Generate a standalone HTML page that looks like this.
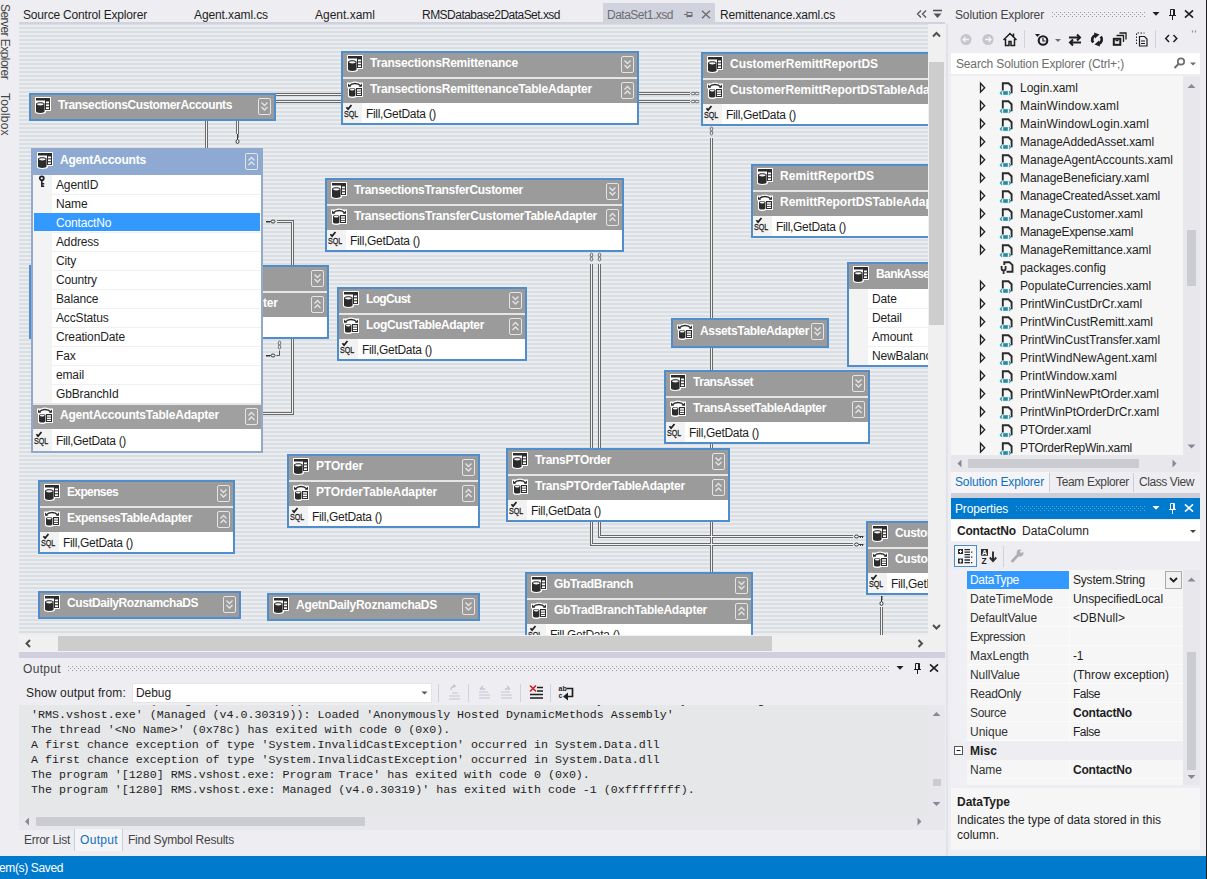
<!DOCTYPE html>
<html lang="en"><head><meta charset="utf-8"><title>DataSet1.xsd - Microsoft Visual Studio</title>
<style>
html,body{margin:0;padding:0}
body{width:1207px;height:879px;overflow:hidden;background:#eeeef2;position:relative;font-family:"Liberation Sans",sans-serif;font-size:12px}
.t{position:absolute;white-space:nowrap;display:block}
.r,.i,.bx{position:absolute;display:block}
.bx{overflow:hidden}
.v{writing-mode:vertical-rl;line-height:14px}
#dz{position:absolute;overflow:hidden;background:repeating-linear-gradient(to bottom,#dadee3 0,#dadee3 1px,#e9edf0 1px,#e9edf0 3px,#dadee3 3px,#dadee3 4px)}
</style></head>
<body>
<div id="dz" style="left:19px;top:24px;width:909px;height:611px"><svg class="i" style="left:0;top:0" width="909" height="611" viewBox="19 24 909 611"><path d="M276 94.500H341 M276 101.500H341 M639 93.500H690 M639 101.500H690 M206.500 121V148 M237.500 121V134 M277 221.500H292.500V413.500H263 M591.500 264V544.500H853 M599.500 264V536.500H853 M711.500 138V635 M881.500 607V635" fill="none" stroke="#6a6a6a" stroke-width="3"/><path d="M276 94.500H341 M276 101.500H341 M639 93.500H690 M639 101.500H690 M206.500 121V148 M237.500 121V134 M277 221.500H292.500V413.500H263 M591.500 264V544.500H853 M599.500 264V536.500H853 M711.500 138V635 M881.500 607V635" fill="none" stroke="#f4f4f4" stroke-width="1"/><path d="M266 221.5h5M267 221.5v1.500M269 221.5v1.500" stroke="#3a3a3a" stroke-width="1" fill="none"/><ellipse cx="273" cy="221.5" rx="2" ry="1.500" fill="#eee" stroke="#3a3a3a" stroke-width="1"/><path d="M266 355.5h5M267 355.5v1.500M269 355.5v1.500" stroke="#3a3a3a" stroke-width="1" fill="none"/><ellipse cx="273" cy="355.5" rx="2" ry="1.500" fill="#eee" stroke="#3a3a3a" stroke-width="1"/><ellipse cx="279.5" cy="343" rx="1.300" ry="2" fill="none" stroke="#555" stroke-width=".8"/><ellipse cx="279.5" cy="347" rx="1.300" ry="2" fill="none" stroke="#555" stroke-width=".8"/><path d="M276.500 355.500h3v-5" fill="none" stroke="#555" stroke-width="1"/><ellipse cx="693" cy="93.5" rx="2" ry="1.300" fill="none" stroke="#555" stroke-width=".8"/><ellipse cx="697" cy="93.5" rx="2" ry="1.300" fill="none" stroke="#555" stroke-width=".8"/><ellipse cx="693" cy="101.5" rx="2" ry="1.300" fill="none" stroke="#555" stroke-width=".8"/><ellipse cx="697" cy="101.5" rx="2" ry="1.300" fill="none" stroke="#555" stroke-width=".8"/><ellipse cx="711.5" cy="129" rx="1.300" ry="2" fill="none" stroke="#555" stroke-width=".8"/><ellipse cx="711.5" cy="133" rx="1.300" ry="2" fill="none" stroke="#555" stroke-width=".8"/><ellipse cx="591.5" cy="255" rx="1.300" ry="2" fill="none" stroke="#555" stroke-width=".8"/><ellipse cx="591.5" cy="259" rx="1.300" ry="2" fill="none" stroke="#555" stroke-width=".8"/><ellipse cx="599.5" cy="255" rx="1.300" ry="2" fill="none" stroke="#555" stroke-width=".8"/><ellipse cx="599.5" cy="259" rx="1.300" ry="2" fill="none" stroke="#555" stroke-width=".8"/><path d="M858.5 536.5h5M860.5 536.5v1.500M862.5 536.5v1.500" stroke="#3a3a3a" stroke-width="1" fill="none"/><ellipse cx="856.5" cy="536.5" rx="2" ry="1.500" fill="#eee" stroke="#3a3a3a" stroke-width="1"/><path d="M858.5 544.5h5M860.5 544.5v1.500M862.5 544.5v1.500" stroke="#3a3a3a" stroke-width="1" fill="none"/><ellipse cx="856.5" cy="544.5" rx="2" ry="1.500" fill="#eee" stroke="#3a3a3a" stroke-width="1"/><path d="M237.5 134v6M237.5 135h1.500M237.5 137h1.500" stroke="#3a3a3a" stroke-width="1" fill="none"/><ellipse cx="237.5" cy="141.5" rx="1.500" ry="2" fill="#eee" stroke="#3a3a3a" stroke-width="1"/><path d="M881.5 596v6M881.5 597h1.500M881.5 599h1.500" stroke="#3a3a3a" stroke-width="1" fill="none"/><ellipse cx="881.5" cy="603.5" rx="1.500" ry="2" fill="#eee" stroke="#3a3a3a" stroke-width="1"/></svg><div class="bx" style="left:10px;top:69px;width:247px;height:28px;background:#4f8dcd"><div class="r" style="left:2px;top:2px;width:243px;height:24px;background:#9b9b9b;"></div><svg class="i" style="left:6px;top:4px" width="17" height="17" viewBox="0 0 17 17" shape-rendering="geometricPrecision"><path d="M0 1c0-.6.400-1 1-1h14c.6 0 1 .4 1 1v12c0 .6-.4 1-1 1h-4v1c0 1.100-2.400 2-5.500 2S0 16.100 0 15z" fill="#fff"/><rect x="1" y="1" width="14" height="2.500" fill="#2b2b2b"/><rect x="10" y="3" width="5" height="10" fill="#2b2b2b"/><rect x="11" y="4.500" width="3" height="1.800" fill="#fff"/><rect x="11" y="7.400" width="3" height="1.800" fill="#fff"/><rect x="11" y="10.300" width="3" height="1.800" fill="#fff"/><path d="M1 6.800c0-.9 1.900-1.600 4.300-1.600s4.300.7 4.300 1.600v7.500c0 .9-1.900 1.600-4.300 1.600S1 15.200 1 14.300z" fill="#2b2b2b"/><ellipse cx="5.300" cy="7.300" rx="3.200" ry="1.100" fill="#f4f4f4"/></svg><span class="t" style="left:29px;top:3.5px;line-height:16px;font-size:12px;color:#fff;letter-spacing:-0.383px;font-weight:700;">TransectionsCustomerAccounts</span><svg class="i" style="left:229px;top:5px" width="13" height="17" viewBox="0 0 13 17"><rect x=".5" y=".5" width="12" height="16" rx="1.500" fill="none" stroke="#e4e4e4" stroke-width="1"/><path d="M3.500 4.500l3 3 3-3M3.500 9l3 3 3-3" fill="none" stroke="#e4e4e4" stroke-width="1.400"/></svg></div><div class="bx" style="left:322px;top:27px;width:298px;height:74px;background:#4f8dcd"><div class="r" style="left:2px;top:2px;width:294px;height:24px;background:#9b9b9b;"></div><svg class="i" style="left:6px;top:4px" width="17" height="17" viewBox="0 0 17 17" shape-rendering="geometricPrecision"><path d="M0 1c0-.6.400-1 1-1h14c.6 0 1 .4 1 1v12c0 .6-.4 1-1 1h-4v1c0 1.100-2.400 2-5.500 2S0 16.100 0 15z" fill="#fff"/><rect x="1" y="1" width="14" height="2.500" fill="#2b2b2b"/><rect x="10" y="3" width="5" height="10" fill="#2b2b2b"/><rect x="11" y="4.500" width="3" height="1.800" fill="#fff"/><rect x="11" y="7.400" width="3" height="1.800" fill="#fff"/><rect x="11" y="10.300" width="3" height="1.800" fill="#fff"/><path d="M1 6.800c0-.9 1.900-1.600 4.300-1.600s4.300.7 4.300 1.600v7.500c0 .9-1.900 1.600-4.300 1.600S1 15.200 1 14.300z" fill="#2b2b2b"/><ellipse cx="5.300" cy="7.300" rx="3.200" ry="1.100" fill="#f4f4f4"/></svg><span class="t" style="left:29px;top:3.5px;line-height:16px;font-size:12px;color:#fff;letter-spacing:-0.197px;font-weight:700;">TransectionsRemittenance</span><svg class="i" style="left:280px;top:5px" width="13" height="17" viewBox="0 0 13 17"><rect x=".5" y=".5" width="12" height="16" rx="1.500" fill="none" stroke="#e4e4e4" stroke-width="1"/><path d="M3.500 4.500l3 3 3-3M3.500 9l3 3 3-3" fill="none" stroke="#e4e4e4" stroke-width="1.400"/></svg><div class="r" style="left:2px;top:26px;width:294px;height:2px;background:#e6e6e6;"></div><div class="r" style="left:2px;top:28px;width:294px;height:24px;background:#9b9b9b;"></div><svg class="i" style="left:6px;top:30px" width="17" height="17" viewBox="0 0 17 17"><path d="M0 1.500h4c2.500-1.500 5.500-1.500 8 0h4v5h-0v9.500H9c-.8.600-2.200 1-3.800 1C2.800 17 1 16.200 1 15V6.500H0z" fill="#fff"/><path d="M2.200 5c2.800-3.300 8.800-3.300 11.600 0" fill="none" stroke="#2b2b2b" stroke-width="1.400"/><polygon points="1,2.500 4.200,5.800 1,5.800" fill="#2b2b2b"/><polygon points="15,2.500 11.800,5.800 15,5.800" fill="#2b2b2b"/><rect x="9" y="7" width="6" height="8" fill="#2b2b2b"/><rect x="10" y="8.200" width="4" height="1.500" fill="#fff"/><rect x="10" y="10.500" width="4" height="1.500" fill="#fff"/><rect x="10" y="12.800" width="4" height="1.200" fill="#fff"/><path d="M2 8.200c0-.7 1.400-1.300 3.200-1.300s3.200.6 3.200 1.300v6c0 .7-1.400 1.300-3.200 1.300S2 14.900 2 14.200z" fill="#2b2b2b"/><ellipse cx="5.200" cy="8.500" rx="2.300" ry=".9" fill="#f4f4f4"/></svg><span class="t" style="left:29px;top:29.5px;line-height:16px;font-size:12px;color:#fff;letter-spacing:-0.181px;font-weight:700;">TransectionsRemittenanceTableAdapter</span><svg class="i" style="left:280px;top:31px" width="13" height="17" viewBox="0 0 13 17"><rect x=".5" y=".5" width="12" height="16" rx="1.500" fill="none" stroke="#e4e4e4" stroke-width="1"/><path d="M3.500 7.500l3-3 3 3M3.500 12l3-3 3 3" fill="none" stroke="#e4e4e4" stroke-width="1.400"/></svg><div class="r" style="left:2px;top:52px;width:294px;height:20px;background:#fff;"></div><div class="r" style="left:2px;top:52px;width:19px;height:20px;background:#f2f2f2;"></div><svg class="i" style="left:2px;top:52px" width="18" height="18" viewBox="0 0 18 18"><path d="M3.400 4.200l1.700 1.900L8.500 2" stroke="#1e1e1e" stroke-width="1.700" fill="none"/><text x="1" y="14.400" font-family="Liberation Sans,sans-serif" font-size="9.800" fill="#1e1e1e" stroke="#1e1e1e" stroke-width=".3" textLength="14.300" lengthAdjust="spacingAndGlyphs">SQL</text></svg><span class="t" style="left:25px;top:55px;line-height:16px;font-size:12px;color:#1e1e1e;letter-spacing:-0.312px;">Fill,GetData ()</span></div><div class="bx" style="left:682px;top:28px;width:259px;height:74px;background:#4f8dcd"><div class="r" style="left:2px;top:2px;width:255px;height:24px;background:#9b9b9b;"></div><svg class="i" style="left:6px;top:4px" width="17" height="17" viewBox="0 0 17 17" shape-rendering="geometricPrecision"><path d="M0 1c0-.6.400-1 1-1h14c.6 0 1 .4 1 1v12c0 .6-.4 1-1 1h-4v1c0 1.100-2.400 2-5.500 2S0 16.100 0 15z" fill="#fff"/><rect x="1" y="1" width="14" height="2.500" fill="#2b2b2b"/><rect x="10" y="3" width="5" height="10" fill="#2b2b2b"/><rect x="11" y="4.500" width="3" height="1.800" fill="#fff"/><rect x="11" y="7.400" width="3" height="1.800" fill="#fff"/><rect x="11" y="10.300" width="3" height="1.800" fill="#fff"/><path d="M1 6.800c0-.9 1.900-1.600 4.300-1.600s4.300.7 4.300 1.600v7.500c0 .9-1.900 1.600-4.300 1.600S1 15.200 1 14.300z" fill="#2b2b2b"/><ellipse cx="5.300" cy="7.300" rx="3.200" ry="1.100" fill="#f4f4f4"/></svg><span class="t" style="left:29px;top:3.5px;line-height:16px;font-size:12px;color:#fff;letter-spacing:-0.031px;font-weight:700;">CustomerRemittReportDS</span><svg class="i" style="left:241px;top:5px" width="13" height="17" viewBox="0 0 13 17"><rect x=".5" y=".5" width="12" height="16" rx="1.500" fill="none" stroke="#e4e4e4" stroke-width="1"/><path d="M3.500 4.500l3 3 3-3M3.500 9l3 3 3-3" fill="none" stroke="#e4e4e4" stroke-width="1.400"/></svg><div class="r" style="left:2px;top:26px;width:255px;height:2px;background:#e6e6e6;"></div><div class="r" style="left:2px;top:28px;width:255px;height:24px;background:#9b9b9b;"></div><svg class="i" style="left:6px;top:30px" width="17" height="17" viewBox="0 0 17 17"><path d="M0 1.500h4c2.500-1.500 5.500-1.500 8 0h4v5h-0v9.500H9c-.8.600-2.200 1-3.800 1C2.800 17 1 16.200 1 15V6.500H0z" fill="#fff"/><path d="M2.200 5c2.800-3.300 8.800-3.300 11.600 0" fill="none" stroke="#2b2b2b" stroke-width="1.400"/><polygon points="1,2.500 4.200,5.800 1,5.800" fill="#2b2b2b"/><polygon points="15,2.500 11.800,5.800 15,5.800" fill="#2b2b2b"/><rect x="9" y="7" width="6" height="8" fill="#2b2b2b"/><rect x="10" y="8.200" width="4" height="1.500" fill="#fff"/><rect x="10" y="10.500" width="4" height="1.500" fill="#fff"/><rect x="10" y="12.800" width="4" height="1.200" fill="#fff"/><path d="M2 8.200c0-.7 1.400-1.300 3.200-1.300s3.200.6 3.200 1.300v6c0 .7-1.400 1.300-3.200 1.300S2 14.900 2 14.200z" fill="#2b2b2b"/><ellipse cx="5.200" cy="8.500" rx="2.300" ry=".9" fill="#f4f4f4"/></svg><span class="t" style="left:29px;top:29.5px;line-height:16px;font-size:12px;color:#fff;letter-spacing:-0.073px;font-weight:700;">CustomerRemittReportDSTableAdapter</span><svg class="i" style="left:241px;top:31px" width="13" height="17" viewBox="0 0 13 17"><rect x=".5" y=".5" width="12" height="16" rx="1.500" fill="none" stroke="#e4e4e4" stroke-width="1"/><path d="M3.500 7.500l3-3 3 3M3.500 12l3-3 3 3" fill="none" stroke="#e4e4e4" stroke-width="1.400"/></svg><div class="r" style="left:2px;top:52px;width:255px;height:20px;background:#fff;"></div><div class="r" style="left:2px;top:52px;width:19px;height:20px;background:#f2f2f2;"></div><svg class="i" style="left:2px;top:52px" width="18" height="18" viewBox="0 0 18 18"><path d="M3.400 4.200l1.700 1.900L8.500 2" stroke="#1e1e1e" stroke-width="1.700" fill="none"/><text x="1" y="14.400" font-family="Liberation Sans,sans-serif" font-size="9.800" fill="#1e1e1e" stroke="#1e1e1e" stroke-width=".3" textLength="14.300" lengthAdjust="spacingAndGlyphs">SQL</text></svg><span class="t" style="left:25px;top:55px;line-height:16px;font-size:12px;color:#1e1e1e;letter-spacing:-0.312px;">Fill,GetData ()</span></div><div class="bx" style="left:306px;top:154px;width:299px;height:74px;background:#4f8dcd"><div class="r" style="left:2px;top:2px;width:295px;height:24px;background:#9b9b9b;"></div><svg class="i" style="left:6px;top:4px" width="17" height="17" viewBox="0 0 17 17" shape-rendering="geometricPrecision"><path d="M0 1c0-.6.400-1 1-1h14c.6 0 1 .4 1 1v12c0 .6-.4 1-1 1h-4v1c0 1.100-2.400 2-5.500 2S0 16.100 0 15z" fill="#fff"/><rect x="1" y="1" width="14" height="2.500" fill="#2b2b2b"/><rect x="10" y="3" width="5" height="10" fill="#2b2b2b"/><rect x="11" y="4.500" width="3" height="1.800" fill="#fff"/><rect x="11" y="7.400" width="3" height="1.800" fill="#fff"/><rect x="11" y="10.300" width="3" height="1.800" fill="#fff"/><path d="M1 6.800c0-.9 1.900-1.600 4.300-1.600s4.300.7 4.300 1.600v7.500c0 .9-1.900 1.600-4.300 1.600S1 15.200 1 14.300z" fill="#2b2b2b"/><ellipse cx="5.300" cy="7.300" rx="3.200" ry="1.100" fill="#f4f4f4"/></svg><span class="t" style="left:29px;top:3.5px;line-height:16px;font-size:12px;color:#fff;letter-spacing:-0.3px;font-weight:700;">TransectionsTransferCustomer</span><svg class="i" style="left:281px;top:5px" width="13" height="17" viewBox="0 0 13 17"><rect x=".5" y=".5" width="12" height="16" rx="1.500" fill="none" stroke="#e4e4e4" stroke-width="1"/><path d="M3.500 4.500l3 3 3-3M3.500 9l3 3 3-3" fill="none" stroke="#e4e4e4" stroke-width="1.400"/></svg><div class="r" style="left:2px;top:26px;width:295px;height:2px;background:#e6e6e6;"></div><div class="r" style="left:2px;top:28px;width:295px;height:24px;background:#9b9b9b;"></div><svg class="i" style="left:6px;top:30px" width="17" height="17" viewBox="0 0 17 17"><path d="M0 1.500h4c2.500-1.500 5.500-1.500 8 0h4v5h-0v9.500H9c-.8.600-2.200 1-3.800 1C2.800 17 1 16.200 1 15V6.500H0z" fill="#fff"/><path d="M2.200 5c2.800-3.300 8.800-3.300 11.600 0" fill="none" stroke="#2b2b2b" stroke-width="1.400"/><polygon points="1,2.500 4.200,5.800 1,5.800" fill="#2b2b2b"/><polygon points="15,2.500 11.800,5.800 15,5.800" fill="#2b2b2b"/><rect x="9" y="7" width="6" height="8" fill="#2b2b2b"/><rect x="10" y="8.200" width="4" height="1.500" fill="#fff"/><rect x="10" y="10.500" width="4" height="1.500" fill="#fff"/><rect x="10" y="12.800" width="4" height="1.200" fill="#fff"/><path d="M2 8.200c0-.7 1.400-1.300 3.200-1.300s3.200.6 3.200 1.300v6c0 .7-1.400 1.300-3.200 1.300S2 14.900 2 14.200z" fill="#2b2b2b"/><ellipse cx="5.200" cy="8.500" rx="2.300" ry=".9" fill="#f4f4f4"/></svg><span class="t" style="left:29px;top:29.5px;line-height:16px;font-size:12px;color:#fff;letter-spacing:-0.255px;font-weight:700;">TransectionsTransferCustomerTableAdapter</span><svg class="i" style="left:281px;top:31px" width="13" height="17" viewBox="0 0 13 17"><rect x=".5" y=".5" width="12" height="16" rx="1.500" fill="none" stroke="#e4e4e4" stroke-width="1"/><path d="M3.500 7.500l3-3 3 3M3.500 12l3-3 3 3" fill="none" stroke="#e4e4e4" stroke-width="1.400"/></svg><div class="r" style="left:2px;top:52px;width:295px;height:20px;background:#fff;"></div><div class="r" style="left:2px;top:52px;width:19px;height:20px;background:#f2f2f2;"></div><svg class="i" style="left:2px;top:52px" width="18" height="18" viewBox="0 0 18 18"><path d="M3.400 4.200l1.700 1.900L8.500 2" stroke="#1e1e1e" stroke-width="1.700" fill="none"/><text x="1" y="14.400" font-family="Liberation Sans,sans-serif" font-size="9.800" fill="#1e1e1e" stroke="#1e1e1e" stroke-width=".3" textLength="14.300" lengthAdjust="spacingAndGlyphs">SQL</text></svg><span class="t" style="left:25px;top:55px;line-height:16px;font-size:12px;color:#1e1e1e;letter-spacing:-0.312px;">Fill,GetData ()</span></div><div class="bx" style="left:732px;top:140px;width:249px;height:74px;background:#4f8dcd"><div class="r" style="left:2px;top:2px;width:245px;height:24px;background:#9b9b9b;"></div><svg class="i" style="left:6px;top:4px" width="17" height="17" viewBox="0 0 17 17" shape-rendering="geometricPrecision"><path d="M0 1c0-.6.400-1 1-1h14c.6 0 1 .4 1 1v12c0 .6-.4 1-1 1h-4v1c0 1.100-2.400 2-5.500 2S0 16.100 0 15z" fill="#fff"/><rect x="1" y="1" width="14" height="2.500" fill="#2b2b2b"/><rect x="10" y="3" width="5" height="10" fill="#2b2b2b"/><rect x="11" y="4.500" width="3" height="1.800" fill="#fff"/><rect x="11" y="7.400" width="3" height="1.800" fill="#fff"/><rect x="11" y="10.300" width="3" height="1.800" fill="#fff"/><path d="M1 6.800c0-.9 1.900-1.600 4.300-1.600s4.300.7 4.300 1.600v7.500c0 .9-1.900 1.600-4.300 1.600S1 15.200 1 14.300z" fill="#2b2b2b"/><ellipse cx="5.300" cy="7.300" rx="3.200" ry="1.100" fill="#f4f4f4"/></svg><span class="t" style="left:29px;top:3.5px;line-height:16px;font-size:12px;color:#fff;letter-spacing:0.094px;font-weight:700;">RemittReportDS</span><svg class="i" style="left:231px;top:5px" width="13" height="17" viewBox="0 0 13 17"><rect x=".5" y=".5" width="12" height="16" rx="1.500" fill="none" stroke="#e4e4e4" stroke-width="1"/><path d="M3.500 4.500l3 3 3-3M3.500 9l3 3 3-3" fill="none" stroke="#e4e4e4" stroke-width="1.400"/></svg><div class="r" style="left:2px;top:26px;width:245px;height:2px;background:#e6e6e6;"></div><div class="r" style="left:2px;top:28px;width:245px;height:24px;background:#9b9b9b;"></div><svg class="i" style="left:6px;top:30px" width="17" height="17" viewBox="0 0 17 17"><path d="M0 1.500h4c2.500-1.500 5.500-1.500 8 0h4v5h-0v9.500H9c-.8.600-2.200 1-3.800 1C2.800 17 1 16.200 1 15V6.500H0z" fill="#fff"/><path d="M2.200 5c2.800-3.300 8.800-3.300 11.600 0" fill="none" stroke="#2b2b2b" stroke-width="1.400"/><polygon points="1,2.500 4.200,5.800 1,5.800" fill="#2b2b2b"/><polygon points="15,2.500 11.800,5.800 15,5.800" fill="#2b2b2b"/><rect x="9" y="7" width="6" height="8" fill="#2b2b2b"/><rect x="10" y="8.200" width="4" height="1.500" fill="#fff"/><rect x="10" y="10.500" width="4" height="1.500" fill="#fff"/><rect x="10" y="12.800" width="4" height="1.200" fill="#fff"/><path d="M2 8.200c0-.7 1.400-1.300 3.200-1.300s3.200.6 3.200 1.300v6c0 .7-1.400 1.300-3.200 1.300S2 14.900 2 14.200z" fill="#2b2b2b"/><ellipse cx="5.200" cy="8.500" rx="2.300" ry=".9" fill="#f4f4f4"/></svg><span class="t" style="left:29px;top:29.5px;line-height:16px;font-size:12px;color:#fff;letter-spacing:-0.018px;font-weight:700;">RemittReportDSTableAdapter</span><svg class="i" style="left:231px;top:31px" width="13" height="17" viewBox="0 0 13 17"><rect x=".5" y=".5" width="12" height="16" rx="1.500" fill="none" stroke="#e4e4e4" stroke-width="1"/><path d="M3.500 7.500l3-3 3 3M3.500 12l3-3 3 3" fill="none" stroke="#e4e4e4" stroke-width="1.400"/></svg><div class="r" style="left:2px;top:52px;width:245px;height:20px;background:#fff;"></div><div class="r" style="left:2px;top:52px;width:19px;height:20px;background:#f2f2f2;"></div><svg class="i" style="left:2px;top:52px" width="18" height="18" viewBox="0 0 18 18"><path d="M3.400 4.200l1.700 1.900L8.500 2" stroke="#1e1e1e" stroke-width="1.700" fill="none"/><text x="1" y="14.400" font-family="Liberation Sans,sans-serif" font-size="9.800" fill="#1e1e1e" stroke="#1e1e1e" stroke-width=".3" textLength="14.300" lengthAdjust="spacingAndGlyphs">SQL</text></svg><span class="t" style="left:25px;top:55px;line-height:16px;font-size:12px;color:#1e1e1e;letter-spacing:-0.312px;">Fill,GetData ()</span></div><div class="bx" style="left:10px;top:241px;width:300px;height:74px;background:#4f8dcd"><div class="r" style="left:2px;top:2px;width:296px;height:24px;background:#9b9b9b;"></div><svg class="i" style="left:6px;top:4px" width="17" height="17" viewBox="0 0 17 17" shape-rendering="geometricPrecision"><path d="M0 1c0-.6.400-1 1-1h14c.6 0 1 .4 1 1v12c0 .6-.4 1-1 1h-4v1c0 1.100-2.400 2-5.500 2S0 16.100 0 15z" fill="#fff"/><rect x="1" y="1" width="14" height="2.500" fill="#2b2b2b"/><rect x="10" y="3" width="5" height="10" fill="#2b2b2b"/><rect x="11" y="4.500" width="3" height="1.800" fill="#fff"/><rect x="11" y="7.400" width="3" height="1.800" fill="#fff"/><rect x="11" y="10.300" width="3" height="1.800" fill="#fff"/><path d="M1 6.800c0-.9 1.900-1.600 4.300-1.600s4.300.7 4.300 1.600v7.500c0 .9-1.900 1.600-4.300 1.600S1 15.200 1 14.300z" fill="#2b2b2b"/><ellipse cx="5.300" cy="7.300" rx="3.200" ry="1.100" fill="#f4f4f4"/></svg><svg class="i" style="left:282px;top:5px" width="13" height="17" viewBox="0 0 13 17"><rect x=".5" y=".5" width="12" height="16" rx="1.500" fill="none" stroke="#e4e4e4" stroke-width="1"/><path d="M3.500 4.500l3 3 3-3M3.500 9l3 3 3-3" fill="none" stroke="#e4e4e4" stroke-width="1.400"/></svg><div class="r" style="left:2px;top:26px;width:296px;height:2px;background:#e6e6e6;"></div><div class="r" style="left:2px;top:28px;width:296px;height:24px;background:#9b9b9b;"></div><svg class="i" style="left:6px;top:30px" width="17" height="17" viewBox="0 0 17 17"><path d="M0 1.500h4c2.500-1.500 5.500-1.500 8 0h4v5h-0v9.500H9c-.8.600-2.200 1-3.800 1C2.800 17 1 16.200 1 15V6.500H0z" fill="#fff"/><path d="M2.200 5c2.800-3.300 8.800-3.300 11.600 0" fill="none" stroke="#2b2b2b" stroke-width="1.400"/><polygon points="1,2.500 4.200,5.800 1,5.800" fill="#2b2b2b"/><polygon points="15,2.500 11.800,5.800 15,5.800" fill="#2b2b2b"/><rect x="9" y="7" width="6" height="8" fill="#2b2b2b"/><rect x="10" y="8.200" width="4" height="1.500" fill="#fff"/><rect x="10" y="10.500" width="4" height="1.500" fill="#fff"/><rect x="10" y="12.800" width="4" height="1.200" fill="#fff"/><path d="M2 8.200c0-.7 1.400-1.300 3.200-1.300s3.200.6 3.200 1.300v6c0 .7-1.400 1.300-3.200 1.300S2 14.900 2 14.200z" fill="#2b2b2b"/><ellipse cx="5.200" cy="8.500" rx="2.300" ry=".9" fill="#f4f4f4"/></svg><svg class="i" style="left:282px;top:31px" width="13" height="17" viewBox="0 0 13 17"><rect x=".5" y=".5" width="12" height="16" rx="1.500" fill="none" stroke="#e4e4e4" stroke-width="1"/><path d="M3.500 7.500l3-3 3 3M3.500 12l3-3 3 3" fill="none" stroke="#e4e4e4" stroke-width="1.400"/></svg><div class="r" style="left:2px;top:52px;width:296px;height:20px;background:#fff;"></div><div class="r" style="left:2px;top:52px;width:19px;height:20px;background:#f2f2f2;"></div><svg class="i" style="left:2px;top:52px" width="18" height="18" viewBox="0 0 18 18"><path d="M3.400 4.200l1.700 1.900L8.500 2" stroke="#1e1e1e" stroke-width="1.700" fill="none"/><text x="1" y="14.400" font-family="Liberation Sans,sans-serif" font-size="9.800" fill="#1e1e1e" stroke="#1e1e1e" stroke-width=".3" textLength="14.300" lengthAdjust="spacingAndGlyphs">SQL</text></svg><span class="t" style="left:25px;top:55px;line-height:16px;font-size:12px;color:#1e1e1e;letter-spacing:-0.312px;">Fill,GetData ()</span></div><span class="t" style="left:244px;top:271px;line-height:16px;font-size:12px;color:#fff;letter-spacing:-0.2px;font-weight:700;">ter</span><div class="bx" style="left:318px;top:263px;width:190px;height:74px;background:#4f8dcd"><div class="r" style="left:2px;top:2px;width:186px;height:24px;background:#9b9b9b;"></div><svg class="i" style="left:6px;top:4px" width="17" height="17" viewBox="0 0 17 17" shape-rendering="geometricPrecision"><path d="M0 1c0-.6.400-1 1-1h14c.6 0 1 .4 1 1v12c0 .6-.4 1-1 1h-4v1c0 1.100-2.400 2-5.500 2S0 16.100 0 15z" fill="#fff"/><rect x="1" y="1" width="14" height="2.500" fill="#2b2b2b"/><rect x="10" y="3" width="5" height="10" fill="#2b2b2b"/><rect x="11" y="4.500" width="3" height="1.800" fill="#fff"/><rect x="11" y="7.400" width="3" height="1.800" fill="#fff"/><rect x="11" y="10.300" width="3" height="1.800" fill="#fff"/><path d="M1 6.800c0-.9 1.900-1.600 4.300-1.600s4.300.7 4.300 1.600v7.500c0 .9-1.900 1.600-4.300 1.600S1 15.200 1 14.300z" fill="#2b2b2b"/><ellipse cx="5.300" cy="7.300" rx="3.200" ry="1.100" fill="#f4f4f4"/></svg><span class="t" style="left:29px;top:3.5px;line-height:16px;font-size:12px;color:#fff;letter-spacing:-0.667px;font-weight:700;">LogCust</span><svg class="i" style="left:172px;top:5px" width="13" height="17" viewBox="0 0 13 17"><rect x=".5" y=".5" width="12" height="16" rx="1.500" fill="none" stroke="#e4e4e4" stroke-width="1"/><path d="M3.500 4.500l3 3 3-3M3.500 9l3 3 3-3" fill="none" stroke="#e4e4e4" stroke-width="1.400"/></svg><div class="r" style="left:2px;top:26px;width:186px;height:2px;background:#e6e6e6;"></div><div class="r" style="left:2px;top:28px;width:186px;height:24px;background:#9b9b9b;"></div><svg class="i" style="left:6px;top:30px" width="17" height="17" viewBox="0 0 17 17"><path d="M0 1.500h4c2.500-1.500 5.500-1.500 8 0h4v5h-0v9.500H9c-.8.600-2.200 1-3.800 1C2.800 17 1 16.200 1 15V6.500H0z" fill="#fff"/><path d="M2.200 5c2.800-3.300 8.800-3.300 11.600 0" fill="none" stroke="#2b2b2b" stroke-width="1.400"/><polygon points="1,2.500 4.200,5.800 1,5.800" fill="#2b2b2b"/><polygon points="15,2.500 11.800,5.800 15,5.800" fill="#2b2b2b"/><rect x="9" y="7" width="6" height="8" fill="#2b2b2b"/><rect x="10" y="8.200" width="4" height="1.500" fill="#fff"/><rect x="10" y="10.500" width="4" height="1.500" fill="#fff"/><rect x="10" y="12.800" width="4" height="1.200" fill="#fff"/><path d="M2 8.200c0-.7 1.400-1.300 3.200-1.300s3.200.6 3.200 1.300v6c0 .7-1.400 1.300-3.200 1.300S2 14.900 2 14.200z" fill="#2b2b2b"/><ellipse cx="5.200" cy="8.500" rx="2.300" ry=".9" fill="#f4f4f4"/></svg><span class="t" style="left:29px;top:29.5px;line-height:16px;font-size:12px;color:#fff;letter-spacing:-0.34px;font-weight:700;">LogCustTableAdapter</span><svg class="i" style="left:172px;top:31px" width="13" height="17" viewBox="0 0 13 17"><rect x=".5" y=".5" width="12" height="16" rx="1.500" fill="none" stroke="#e4e4e4" stroke-width="1"/><path d="M3.500 7.500l3-3 3 3M3.500 12l3-3 3 3" fill="none" stroke="#e4e4e4" stroke-width="1.400"/></svg><div class="r" style="left:2px;top:52px;width:186px;height:20px;background:#fff;"></div><div class="r" style="left:2px;top:52px;width:19px;height:20px;background:#f2f2f2;"></div><svg class="i" style="left:2px;top:52px" width="18" height="18" viewBox="0 0 18 18"><path d="M3.400 4.200l1.700 1.900L8.500 2" stroke="#1e1e1e" stroke-width="1.700" fill="none"/><text x="1" y="14.400" font-family="Liberation Sans,sans-serif" font-size="9.800" fill="#1e1e1e" stroke="#1e1e1e" stroke-width=".3" textLength="14.300" lengthAdjust="spacingAndGlyphs">SQL</text></svg><span class="t" style="left:25px;top:55px;line-height:16px;font-size:12px;color:#1e1e1e;letter-spacing:-0.312px;">Fill,GetData ()</span></div><div class="bx" style="left:652px;top:294px;width:158px;height:30px;background:#4f8dcd"><div class="r" style="left:2px;top:2px;width:154px;height:26px;background:#9b9b9b;"></div><svg class="i" style="left:6px;top:5px" width="17" height="17" viewBox="0 0 17 17"><path d="M0 1.500h4c2.500-1.500 5.500-1.500 8 0h4v5h-0v9.500H9c-.8.600-2.200 1-3.800 1C2.800 17 1 16.200 1 15V6.500H0z" fill="#fff"/><path d="M2.200 5c2.800-3.300 8.800-3.300 11.600 0" fill="none" stroke="#2b2b2b" stroke-width="1.400"/><polygon points="1,2.500 4.200,5.800 1,5.800" fill="#2b2b2b"/><polygon points="15,2.500 11.800,5.800 15,5.800" fill="#2b2b2b"/><rect x="9" y="7" width="6" height="8" fill="#2b2b2b"/><rect x="10" y="8.200" width="4" height="1.500" fill="#fff"/><rect x="10" y="10.500" width="4" height="1.500" fill="#fff"/><rect x="10" y="12.800" width="4" height="1.200" fill="#fff"/><path d="M2 8.200c0-.7 1.400-1.300 3.200-1.300s3.200.6 3.200 1.300v6c0 .7-1.400 1.300-3.200 1.300S2 14.900 2 14.200z" fill="#2b2b2b"/><ellipse cx="5.200" cy="8.500" rx="2.300" ry=".9" fill="#f4f4f4"/></svg><span class="t" style="left:29px;top:4.5px;line-height:16px;font-size:12px;color:#fff;letter-spacing:-0.342px;font-weight:700;">AssetsTableAdapter</span><svg class="i" style="left:140px;top:5px" width="13" height="17" viewBox="0 0 13 17"><rect x=".5" y=".5" width="12" height="16" rx="1.500" fill="none" stroke="#e4e4e4" stroke-width="1"/><path d="M3.500 4.500l3 3 3-3M3.500 9l3 3 3-3" fill="none" stroke="#e4e4e4" stroke-width="1.400"/></svg></div><div class="bx" style="left:828px;top:238px;width:163px;height:105px;background:#4f8dcd"><div class="r" style="left:2px;top:2px;width:159px;height:25px;background:#9b9b9b;"></div><svg class="i" style="left:6px;top:4px" width="17" height="17" viewBox="0 0 17 17" shape-rendering="geometricPrecision"><path d="M0 1c0-.6.400-1 1-1h14c.6 0 1 .4 1 1v12c0 .6-.4 1-1 1h-4v1c0 1.100-2.400 2-5.500 2S0 16.100 0 15z" fill="#fff"/><rect x="1" y="1" width="14" height="2.500" fill="#2b2b2b"/><rect x="10" y="3" width="5" height="10" fill="#2b2b2b"/><rect x="11" y="4.500" width="3" height="1.800" fill="#fff"/><rect x="11" y="7.400" width="3" height="1.800" fill="#fff"/><rect x="11" y="10.300" width="3" height="1.800" fill="#fff"/><path d="M1 6.800c0-.9 1.900-1.600 4.300-1.600s4.300.7 4.300 1.600v7.500c0 .9-1.900 1.600-4.300 1.600S1 15.200 1 14.300z" fill="#2b2b2b"/><ellipse cx="5.300" cy="7.300" rx="3.200" ry="1.100" fill="#f4f4f4"/></svg><span class="t" style="left:29px;top:4px;line-height:16px;font-size:12px;color:#fff;letter-spacing:-0.57px;font-weight:700;">BankAssets</span><div class="r" style="left:2px;top:27px;width:159px;height:76px;background:#fff;"></div><div class="r" style="left:2px;top:27px;width:19px;height:76px;background:#f3f3f3;"></div><span class="t" style="left:25px;top:28.5px;line-height:16px;font-size:12px;color:#1e1e1e;letter-spacing:-0.15px;">Date</span><div class="r" style="left:21px;top:46px;width:140px;height:1px;background:#f0f0f0;"></div><span class="t" style="left:25px;top:47.5px;line-height:16px;font-size:12px;color:#1e1e1e;letter-spacing:-0.15px;">Detail</span><div class="r" style="left:21px;top:65px;width:140px;height:1px;background:#f0f0f0;"></div><span class="t" style="left:25px;top:66.5px;line-height:16px;font-size:12px;color:#1e1e1e;letter-spacing:-0.15px;">Amount</span><div class="r" style="left:21px;top:84px;width:140px;height:1px;background:#f0f0f0;"></div><span class="t" style="left:25px;top:85.5px;line-height:16px;font-size:12px;color:#1e1e1e;letter-spacing:-0.15px;">NewBalance</span></div><div class="bx" style="left:645px;top:346px;width:206px;height:74px;background:#4f8dcd"><div class="r" style="left:2px;top:2px;width:202px;height:24px;background:#9b9b9b;"></div><svg class="i" style="left:6px;top:4px" width="17" height="17" viewBox="0 0 17 17" shape-rendering="geometricPrecision"><path d="M0 1c0-.6.400-1 1-1h14c.6 0 1 .4 1 1v12c0 .6-.4 1-1 1h-4v1c0 1.100-2.400 2-5.500 2S0 16.100 0 15z" fill="#fff"/><rect x="1" y="1" width="14" height="2.500" fill="#2b2b2b"/><rect x="10" y="3" width="5" height="10" fill="#2b2b2b"/><rect x="11" y="4.500" width="3" height="1.800" fill="#fff"/><rect x="11" y="7.400" width="3" height="1.800" fill="#fff"/><rect x="11" y="10.300" width="3" height="1.800" fill="#fff"/><path d="M1 6.800c0-.9 1.900-1.600 4.300-1.600s4.300.7 4.300 1.600v7.500c0 .9-1.900 1.600-4.300 1.600S1 15.200 1 14.300z" fill="#2b2b2b"/><ellipse cx="5.300" cy="7.300" rx="3.200" ry="1.100" fill="#f4f4f4"/></svg><span class="t" style="left:29px;top:3.5px;line-height:16px;font-size:12px;color:#fff;letter-spacing:-0.47px;font-weight:700;">TransAsset</span><svg class="i" style="left:188px;top:5px" width="13" height="17" viewBox="0 0 13 17"><rect x=".5" y=".5" width="12" height="16" rx="1.500" fill="none" stroke="#e4e4e4" stroke-width="1"/><path d="M3.500 4.500l3 3 3-3M3.500 9l3 3 3-3" fill="none" stroke="#e4e4e4" stroke-width="1.400"/></svg><div class="r" style="left:2px;top:26px;width:202px;height:2px;background:#e6e6e6;"></div><div class="r" style="left:2px;top:28px;width:202px;height:24px;background:#9b9b9b;"></div><svg class="i" style="left:6px;top:30px" width="17" height="17" viewBox="0 0 17 17"><path d="M0 1.500h4c2.500-1.500 5.500-1.500 8 0h4v5h-0v9.500H9c-.8.600-2.200 1-3.800 1C2.800 17 1 16.200 1 15V6.500H0z" fill="#fff"/><path d="M2.200 5c2.800-3.300 8.800-3.300 11.600 0" fill="none" stroke="#2b2b2b" stroke-width="1.400"/><polygon points="1,2.500 4.200,5.800 1,5.800" fill="#2b2b2b"/><polygon points="15,2.500 11.800,5.800 15,5.800" fill="#2b2b2b"/><rect x="9" y="7" width="6" height="8" fill="#2b2b2b"/><rect x="10" y="8.200" width="4" height="1.500" fill="#fff"/><rect x="10" y="10.500" width="4" height="1.500" fill="#fff"/><rect x="10" y="12.800" width="4" height="1.200" fill="#fff"/><path d="M2 8.200c0-.7 1.400-1.300 3.200-1.300s3.200.6 3.200 1.300v6c0 .7-1.400 1.300-3.200 1.300S2 14.900 2 14.200z" fill="#2b2b2b"/><ellipse cx="5.200" cy="8.500" rx="2.300" ry=".9" fill="#f4f4f4"/></svg><span class="t" style="left:29px;top:29.5px;line-height:16px;font-size:12px;color:#fff;letter-spacing:-0.341px;font-weight:700;">TransAssetTableAdapter</span><svg class="i" style="left:188px;top:31px" width="13" height="17" viewBox="0 0 13 17"><rect x=".5" y=".5" width="12" height="16" rx="1.500" fill="none" stroke="#e4e4e4" stroke-width="1"/><path d="M3.500 7.500l3-3 3 3M3.500 12l3-3 3 3" fill="none" stroke="#e4e4e4" stroke-width="1.400"/></svg><div class="r" style="left:2px;top:52px;width:202px;height:20px;background:#fff;"></div><div class="r" style="left:2px;top:52px;width:19px;height:20px;background:#f2f2f2;"></div><svg class="i" style="left:2px;top:52px" width="18" height="18" viewBox="0 0 18 18"><path d="M3.400 4.200l1.700 1.900L8.500 2" stroke="#1e1e1e" stroke-width="1.700" fill="none"/><text x="1" y="14.400" font-family="Liberation Sans,sans-serif" font-size="9.800" fill="#1e1e1e" stroke="#1e1e1e" stroke-width=".3" textLength="14.300" lengthAdjust="spacingAndGlyphs">SQL</text></svg><span class="t" style="left:25px;top:55px;line-height:16px;font-size:12px;color:#1e1e1e;letter-spacing:-0.312px;">Fill,GetData ()</span></div><div class="bx" style="left:12px;top:124px;width:232px;height:305px;background:#92a9cd"><div class="r" style="left:2px;top:2px;width:228px;height:24px;background:#8eaad3;"></div><svg class="i" style="left:6px;top:4px" width="17" height="17" viewBox="0 0 17 17" shape-rendering="geometricPrecision"><path d="M0 1c0-.6.400-1 1-1h14c.6 0 1 .4 1 1v12c0 .6-.4 1-1 1h-4v1c0 1.100-2.400 2-5.500 2S0 16.100 0 15z" fill="#fff"/><rect x="1" y="1" width="14" height="2.500" fill="#2b2b2b"/><rect x="10" y="3" width="5" height="10" fill="#2b2b2b"/><rect x="11" y="4.500" width="3" height="1.800" fill="#fff"/><rect x="11" y="7.400" width="3" height="1.800" fill="#fff"/><rect x="11" y="10.300" width="3" height="1.800" fill="#fff"/><path d="M1 6.800c0-.9 1.900-1.600 4.300-1.600s4.300.7 4.300 1.600v7.500c0 .9-1.900 1.600-4.300 1.600S1 15.200 1 14.300z" fill="#2b2b2b"/><ellipse cx="5.300" cy="7.300" rx="3.200" ry="1.100" fill="#f4f4f4"/></svg><span class="t" style="left:29px;top:3.5px;line-height:16px;font-size:12px;color:#fff;letter-spacing:-0.206px;font-weight:700;">AgentAccounts</span><svg class="i" style="left:214px;top:5px" width="13" height="17" viewBox="0 0 13 17"><rect x=".5" y=".5" width="12" height="16" rx="1.500" fill="none" stroke="#e4e4e4" stroke-width="1"/><path d="M3.500 7.500l3-3 3 3M3.500 12l3-3 3 3" fill="none" stroke="#e4e4e4" stroke-width="1.400"/></svg><div class="r" style="left:2px;top:27px;width:228px;height:228px;background:#fff;"></div><div class="r" style="left:2px;top:27px;width:19px;height:228px;background:#f3f3f3;"></div><span class="t" style="left:25px;top:28.5px;line-height:16px;font-size:12px;color:#1e1e1e;letter-spacing:-0.15px;">AgentID</span><svg class="i" style="left:7px;top:27px" width="9" height="14" viewBox="0 0 9 14"><circle cx="3.800" cy="3.300" r="2" fill="none" stroke="#1e1e1e" stroke-width="1.700"/><path d="M3.800 5.500v6.500M3.800 8.700h2.400M3.800 11.200h2.400" stroke="#1e1e1e" stroke-width="1.500" fill="none"/></svg><div class="r" style="left:21px;top:46px;width:209px;height:1px;background:#f0f0f0;"></div><span class="t" style="left:25px;top:47.5px;line-height:16px;font-size:12px;color:#1e1e1e;letter-spacing:-0.15px;">Name</span><div class="r" style="left:21px;top:65px;width:209px;height:1px;background:#f0f0f0;"></div><div class="r" style="left:3px;top:65px;width:226px;height:18px;background:#3399ff;"></div><span class="t" style="left:25px;top:66.5px;line-height:16px;font-size:12px;color:#fff;letter-spacing:-0.15px;">ContactNo</span><div class="r" style="left:21px;top:84px;width:209px;height:1px;background:#f0f0f0;"></div><span class="t" style="left:25px;top:85.5px;line-height:16px;font-size:12px;color:#1e1e1e;letter-spacing:-0.15px;">Address</span><div class="r" style="left:21px;top:103px;width:209px;height:1px;background:#f0f0f0;"></div><span class="t" style="left:25px;top:104.5px;line-height:16px;font-size:12px;color:#1e1e1e;letter-spacing:-0.15px;">City</span><div class="r" style="left:21px;top:122px;width:209px;height:1px;background:#f0f0f0;"></div><span class="t" style="left:25px;top:123.5px;line-height:16px;font-size:12px;color:#1e1e1e;letter-spacing:-0.15px;">Country</span><div class="r" style="left:21px;top:141px;width:209px;height:1px;background:#f0f0f0;"></div><span class="t" style="left:25px;top:142.5px;line-height:16px;font-size:12px;color:#1e1e1e;letter-spacing:-0.15px;">Balance</span><div class="r" style="left:21px;top:160px;width:209px;height:1px;background:#f0f0f0;"></div><span class="t" style="left:25px;top:161.5px;line-height:16px;font-size:12px;color:#1e1e1e;letter-spacing:-0.15px;">AccStatus</span><div class="r" style="left:21px;top:179px;width:209px;height:1px;background:#f0f0f0;"></div><span class="t" style="left:25px;top:180.5px;line-height:16px;font-size:12px;color:#1e1e1e;letter-spacing:-0.15px;">CreationDate</span><div class="r" style="left:21px;top:198px;width:209px;height:1px;background:#f0f0f0;"></div><span class="t" style="left:25px;top:199.5px;line-height:16px;font-size:12px;color:#1e1e1e;letter-spacing:-0.15px;">Fax</span><div class="r" style="left:21px;top:217px;width:209px;height:1px;background:#f0f0f0;"></div><span class="t" style="left:25px;top:218.5px;line-height:16px;font-size:12px;color:#1e1e1e;letter-spacing:-0.15px;">email</span><div class="r" style="left:21px;top:236px;width:209px;height:1px;background:#f0f0f0;"></div><span class="t" style="left:25px;top:237.5px;line-height:16px;font-size:12px;color:#1e1e1e;letter-spacing:-0.15px;">GbBranchId</span><div class="r" style="left:2px;top:255px;width:228px;height:2px;background:#e6e6e6;"></div><div class="r" style="left:2px;top:257px;width:228px;height:24px;background:#a0a0a0;"></div><svg class="i" style="left:6px;top:259px" width="17" height="17" viewBox="0 0 17 17"><path d="M0 1.500h4c2.500-1.500 5.500-1.500 8 0h4v5h-0v9.500H9c-.8.600-2.200 1-3.800 1C2.800 17 1 16.200 1 15V6.500H0z" fill="#fff"/><path d="M2.200 5c2.800-3.300 8.800-3.300 11.600 0" fill="none" stroke="#2b2b2b" stroke-width="1.400"/><polygon points="1,2.500 4.200,5.800 1,5.800" fill="#2b2b2b"/><polygon points="15,2.500 11.800,5.800 15,5.800" fill="#2b2b2b"/><rect x="9" y="7" width="6" height="8" fill="#2b2b2b"/><rect x="10" y="8.200" width="4" height="1.500" fill="#fff"/><rect x="10" y="10.500" width="4" height="1.500" fill="#fff"/><rect x="10" y="12.800" width="4" height="1.200" fill="#fff"/><path d="M2 8.200c0-.7 1.400-1.300 3.200-1.300s3.200.6 3.200 1.300v6c0 .7-1.400 1.300-3.200 1.300S2 14.900 2 14.200z" fill="#2b2b2b"/><ellipse cx="5.200" cy="8.500" rx="2.300" ry=".9" fill="#f4f4f4"/></svg><span class="t" style="left:29px;top:258.5px;line-height:16px;font-size:12px;color:#fff;letter-spacing:-0.219px;font-weight:700;">AgentAccountsTableAdapter</span><svg class="i" style="left:214px;top:260px" width="13" height="17" viewBox="0 0 13 17"><rect x=".5" y=".5" width="12" height="16" rx="1.500" fill="none" stroke="#e4e4e4" stroke-width="1"/><path d="M3.500 7.500l3-3 3 3M3.500 12l3-3 3 3" fill="none" stroke="#e4e4e4" stroke-width="1.400"/></svg><div class="r" style="left:2px;top:281px;width:228px;height:22px;background:#fff;"></div><div class="r" style="left:2px;top:281px;width:19px;height:22px;background:#f2f2f2;"></div><svg class="i" style="left:2px;top:282px" width="18" height="18" viewBox="0 0 18 18"><path d="M3.400 4.200l1.700 1.900L8.500 2" stroke="#1e1e1e" stroke-width="1.700" fill="none"/><text x="1" y="14.400" font-family="Liberation Sans,sans-serif" font-size="9.800" fill="#1e1e1e" stroke="#1e1e1e" stroke-width=".3" textLength="14.300" lengthAdjust="spacingAndGlyphs">SQL</text></svg><span class="t" style="left:25px;top:285px;line-height:16px;font-size:12px;color:#1e1e1e;letter-spacing:-0.312px;">Fill,GetData ()</span></div><div class="bx" style="left:19px;top:456px;width:197px;height:74px;background:#4f8dcd"><div class="r" style="left:2px;top:2px;width:193px;height:24px;background:#9b9b9b;"></div><svg class="i" style="left:6px;top:4px" width="17" height="17" viewBox="0 0 17 17" shape-rendering="geometricPrecision"><path d="M0 1c0-.6.400-1 1-1h14c.6 0 1 .4 1 1v12c0 .6-.4 1-1 1h-4v1c0 1.100-2.400 2-5.500 2S0 16.100 0 15z" fill="#fff"/><rect x="1" y="1" width="14" height="2.500" fill="#2b2b2b"/><rect x="10" y="3" width="5" height="10" fill="#2b2b2b"/><rect x="11" y="4.500" width="3" height="1.800" fill="#fff"/><rect x="11" y="7.400" width="3" height="1.800" fill="#fff"/><rect x="11" y="10.300" width="3" height="1.800" fill="#fff"/><path d="M1 6.800c0-.9 1.900-1.600 4.300-1.600s4.300.7 4.300 1.600v7.500c0 .9-1.900 1.600-4.300 1.600S1 15.200 1 14.300z" fill="#2b2b2b"/><ellipse cx="5.300" cy="7.300" rx="3.200" ry="1.100" fill="#f4f4f4"/></svg><span class="t" style="left:29px;top:3.5px;line-height:16px;font-size:12px;color:#fff;letter-spacing:-0.63px;font-weight:700;">Expenses</span><svg class="i" style="left:179px;top:5px" width="13" height="17" viewBox="0 0 13 17"><rect x=".5" y=".5" width="12" height="16" rx="1.500" fill="none" stroke="#e4e4e4" stroke-width="1"/><path d="M3.500 4.500l3 3 3-3M3.500 9l3 3 3-3" fill="none" stroke="#e4e4e4" stroke-width="1.400"/></svg><div class="r" style="left:2px;top:26px;width:193px;height:2px;background:#e6e6e6;"></div><div class="r" style="left:2px;top:28px;width:193px;height:24px;background:#9b9b9b;"></div><svg class="i" style="left:6px;top:30px" width="17" height="17" viewBox="0 0 17 17"><path d="M0 1.500h4c2.500-1.500 5.500-1.500 8 0h4v5h-0v9.500H9c-.8.600-2.200 1-3.800 1C2.800 17 1 16.200 1 15V6.500H0z" fill="#fff"/><path d="M2.200 5c2.800-3.300 8.800-3.300 11.600 0" fill="none" stroke="#2b2b2b" stroke-width="1.400"/><polygon points="1,2.500 4.200,5.800 1,5.800" fill="#2b2b2b"/><polygon points="15,2.500 11.800,5.800 15,5.800" fill="#2b2b2b"/><rect x="9" y="7" width="6" height="8" fill="#2b2b2b"/><rect x="10" y="8.200" width="4" height="1.500" fill="#fff"/><rect x="10" y="10.500" width="4" height="1.500" fill="#fff"/><rect x="10" y="12.800" width="4" height="1.200" fill="#fff"/><path d="M2 8.200c0-.7 1.400-1.300 3.200-1.300s3.200.6 3.200 1.300v6c0 .7-1.400 1.300-3.200 1.300S2 14.900 2 14.200z" fill="#2b2b2b"/><ellipse cx="5.200" cy="8.500" rx="2.300" ry=".9" fill="#f4f4f4"/></svg><span class="t" style="left:29px;top:29.5px;line-height:16px;font-size:12px;color:#fff;letter-spacing:-0.342px;font-weight:700;">ExpensesTableAdapter</span><svg class="i" style="left:179px;top:31px" width="13" height="17" viewBox="0 0 13 17"><rect x=".5" y=".5" width="12" height="16" rx="1.500" fill="none" stroke="#e4e4e4" stroke-width="1"/><path d="M3.500 7.500l3-3 3 3M3.500 12l3-3 3 3" fill="none" stroke="#e4e4e4" stroke-width="1.400"/></svg><div class="r" style="left:2px;top:52px;width:193px;height:20px;background:#fff;"></div><div class="r" style="left:2px;top:52px;width:19px;height:20px;background:#f2f2f2;"></div><svg class="i" style="left:2px;top:52px" width="18" height="18" viewBox="0 0 18 18"><path d="M3.400 4.200l1.700 1.900L8.500 2" stroke="#1e1e1e" stroke-width="1.700" fill="none"/><text x="1" y="14.400" font-family="Liberation Sans,sans-serif" font-size="9.800" fill="#1e1e1e" stroke="#1e1e1e" stroke-width=".3" textLength="14.300" lengthAdjust="spacingAndGlyphs">SQL</text></svg><span class="t" style="left:25px;top:55px;line-height:16px;font-size:12px;color:#1e1e1e;letter-spacing:-0.312px;">Fill,GetData ()</span></div><div class="bx" style="left:268px;top:430px;width:193px;height:74px;background:#4f8dcd"><div class="r" style="left:2px;top:2px;width:189px;height:24px;background:#9b9b9b;"></div><svg class="i" style="left:6px;top:4px" width="17" height="17" viewBox="0 0 17 17" shape-rendering="geometricPrecision"><path d="M0 1c0-.6.400-1 1-1h14c.6 0 1 .4 1 1v12c0 .6-.4 1-1 1h-4v1c0 1.100-2.400 2-5.500 2S0 16.100 0 15z" fill="#fff"/><rect x="1" y="1" width="14" height="2.500" fill="#2b2b2b"/><rect x="10" y="3" width="5" height="10" fill="#2b2b2b"/><rect x="11" y="4.500" width="3" height="1.800" fill="#fff"/><rect x="11" y="7.400" width="3" height="1.800" fill="#fff"/><rect x="11" y="10.300" width="3" height="1.800" fill="#fff"/><path d="M1 6.800c0-.9 1.900-1.600 4.300-1.600s4.300.7 4.300 1.600v7.500c0 .9-1.900 1.600-4.300 1.600S1 15.200 1 14.300z" fill="#2b2b2b"/><ellipse cx="5.300" cy="7.300" rx="3.200" ry="1.100" fill="#f4f4f4"/></svg><span class="t" style="left:29px;top:3.5px;line-height:16px;font-size:12px;color:#fff;letter-spacing:-0.115px;font-weight:700;">PTOrder</span><svg class="i" style="left:175px;top:5px" width="13" height="17" viewBox="0 0 13 17"><rect x=".5" y=".5" width="12" height="16" rx="1.500" fill="none" stroke="#e4e4e4" stroke-width="1"/><path d="M3.500 4.500l3 3 3-3M3.500 9l3 3 3-3" fill="none" stroke="#e4e4e4" stroke-width="1.400"/></svg><div class="r" style="left:2px;top:26px;width:189px;height:2px;background:#e6e6e6;"></div><div class="r" style="left:2px;top:28px;width:189px;height:24px;background:#9b9b9b;"></div><svg class="i" style="left:6px;top:30px" width="17" height="17" viewBox="0 0 17 17"><path d="M0 1.500h4c2.500-1.500 5.500-1.500 8 0h4v5h-0v9.500H9c-.8.600-2.200 1-3.800 1C2.800 17 1 16.200 1 15V6.500H0z" fill="#fff"/><path d="M2.200 5c2.800-3.300 8.800-3.300 11.600 0" fill="none" stroke="#2b2b2b" stroke-width="1.400"/><polygon points="1,2.500 4.200,5.800 1,5.800" fill="#2b2b2b"/><polygon points="15,2.500 11.800,5.800 15,5.800" fill="#2b2b2b"/><rect x="9" y="7" width="6" height="8" fill="#2b2b2b"/><rect x="10" y="8.200" width="4" height="1.500" fill="#fff"/><rect x="10" y="10.500" width="4" height="1.500" fill="#fff"/><rect x="10" y="12.800" width="4" height="1.200" fill="#fff"/><path d="M2 8.200c0-.7 1.400-1.300 3.200-1.300s3.200.6 3.200 1.300v6c0 .7-1.400 1.300-3.200 1.300S2 14.900 2 14.200z" fill="#2b2b2b"/><ellipse cx="5.200" cy="8.500" rx="2.300" ry=".9" fill="#f4f4f4"/></svg><span class="t" style="left:29px;top:29.5px;line-height:16px;font-size:12px;color:#fff;letter-spacing:-0.136px;font-weight:700;">PTOrderTableAdapter</span><svg class="i" style="left:175px;top:31px" width="13" height="17" viewBox="0 0 13 17"><rect x=".5" y=".5" width="12" height="16" rx="1.500" fill="none" stroke="#e4e4e4" stroke-width="1"/><path d="M3.500 7.500l3-3 3 3M3.500 12l3-3 3 3" fill="none" stroke="#e4e4e4" stroke-width="1.400"/></svg><div class="r" style="left:2px;top:52px;width:189px;height:20px;background:#fff;"></div><div class="r" style="left:2px;top:52px;width:19px;height:20px;background:#f2f2f2;"></div><svg class="i" style="left:2px;top:52px" width="18" height="18" viewBox="0 0 18 18"><path d="M3.400 4.200l1.700 1.900L8.500 2" stroke="#1e1e1e" stroke-width="1.700" fill="none"/><text x="1" y="14.400" font-family="Liberation Sans,sans-serif" font-size="9.800" fill="#1e1e1e" stroke="#1e1e1e" stroke-width=".3" textLength="14.300" lengthAdjust="spacingAndGlyphs">SQL</text></svg><span class="t" style="left:25px;top:55px;line-height:16px;font-size:12px;color:#1e1e1e;letter-spacing:-0.312px;">Fill,GetData ()</span></div><div class="bx" style="left:487px;top:424px;width:224px;height:74px;background:#4f8dcd"><div class="r" style="left:2px;top:2px;width:220px;height:24px;background:#9b9b9b;"></div><svg class="i" style="left:6px;top:4px" width="17" height="17" viewBox="0 0 17 17" shape-rendering="geometricPrecision"><path d="M0 1c0-.6.400-1 1-1h14c.6 0 1 .4 1 1v12c0 .6-.4 1-1 1h-4v1c0 1.100-2.400 2-5.500 2S0 16.100 0 15z" fill="#fff"/><rect x="1" y="1" width="14" height="2.500" fill="#2b2b2b"/><rect x="10" y="3" width="5" height="10" fill="#2b2b2b"/><rect x="11" y="4.500" width="3" height="1.800" fill="#fff"/><rect x="11" y="7.400" width="3" height="1.800" fill="#fff"/><rect x="11" y="10.300" width="3" height="1.800" fill="#fff"/><path d="M1 6.800c0-.9 1.900-1.600 4.300-1.600s4.300.7 4.300 1.600v7.500c0 .9-1.900 1.600-4.300 1.600S1 15.200 1 14.300z" fill="#2b2b2b"/><ellipse cx="5.300" cy="7.300" rx="3.200" ry="1.100" fill="#f4f4f4"/></svg><span class="t" style="left:29px;top:3.5px;line-height:16px;font-size:12px;color:#fff;letter-spacing:-0.318px;font-weight:700;">TransPTOrder</span><svg class="i" style="left:206px;top:5px" width="13" height="17" viewBox="0 0 13 17"><rect x=".5" y=".5" width="12" height="16" rx="1.500" fill="none" stroke="#e4e4e4" stroke-width="1"/><path d="M3.500 4.500l3 3 3-3M3.500 9l3 3 3-3" fill="none" stroke="#e4e4e4" stroke-width="1.400"/></svg><div class="r" style="left:2px;top:26px;width:220px;height:2px;background:#e6e6e6;"></div><div class="r" style="left:2px;top:28px;width:220px;height:24px;background:#9b9b9b;"></div><svg class="i" style="left:6px;top:30px" width="17" height="17" viewBox="0 0 17 17"><path d="M0 1.500h4c2.500-1.500 5.500-1.500 8 0h4v5h-0v9.500H9c-.8.600-2.200 1-3.800 1C2.800 17 1 16.200 1 15V6.500H0z" fill="#fff"/><path d="M2.200 5c2.800-3.300 8.800-3.300 11.600 0" fill="none" stroke="#2b2b2b" stroke-width="1.400"/><polygon points="1,2.500 4.200,5.800 1,5.800" fill="#2b2b2b"/><polygon points="15,2.500 11.800,5.800 15,5.800" fill="#2b2b2b"/><rect x="9" y="7" width="6" height="8" fill="#2b2b2b"/><rect x="10" y="8.200" width="4" height="1.500" fill="#fff"/><rect x="10" y="10.500" width="4" height="1.500" fill="#fff"/><rect x="10" y="12.800" width="4" height="1.200" fill="#fff"/><path d="M2 8.200c0-.7 1.400-1.300 3.200-1.300s3.200.6 3.200 1.300v6c0 .7-1.400 1.300-3.200 1.300S2 14.900 2 14.200z" fill="#2b2b2b"/><ellipse cx="5.200" cy="8.500" rx="2.300" ry=".9" fill="#f4f4f4"/></svg><span class="t" style="left:29px;top:29.5px;line-height:16px;font-size:12px;color:#fff;letter-spacing:-0.234px;font-weight:700;">TransPTOrderTableAdapter</span><svg class="i" style="left:206px;top:31px" width="13" height="17" viewBox="0 0 13 17"><rect x=".5" y=".5" width="12" height="16" rx="1.500" fill="none" stroke="#e4e4e4" stroke-width="1"/><path d="M3.500 7.500l3-3 3 3M3.500 12l3-3 3 3" fill="none" stroke="#e4e4e4" stroke-width="1.400"/></svg><div class="r" style="left:2px;top:52px;width:220px;height:20px;background:#fff;"></div><div class="r" style="left:2px;top:52px;width:19px;height:20px;background:#f2f2f2;"></div><svg class="i" style="left:2px;top:52px" width="18" height="18" viewBox="0 0 18 18"><path d="M3.400 4.200l1.700 1.900L8.500 2" stroke="#1e1e1e" stroke-width="1.700" fill="none"/><text x="1" y="14.400" font-family="Liberation Sans,sans-serif" font-size="9.800" fill="#1e1e1e" stroke="#1e1e1e" stroke-width=".3" textLength="14.300" lengthAdjust="spacingAndGlyphs">SQL</text></svg><span class="t" style="left:25px;top:55px;line-height:16px;font-size:12px;color:#1e1e1e;letter-spacing:-0.312px;">Fill,GetData ()</span></div><div class="bx" style="left:847px;top:497px;width:154px;height:74px;background:#4f8dcd"><div class="r" style="left:2px;top:2px;width:150px;height:24px;background:#9b9b9b;"></div><svg class="i" style="left:6px;top:4px" width="17" height="17" viewBox="0 0 17 17" shape-rendering="geometricPrecision"><path d="M0 1c0-.6.400-1 1-1h14c.6 0 1 .4 1 1v12c0 .6-.4 1-1 1h-4v1c0 1.100-2.400 2-5.500 2S0 16.100 0 15z" fill="#fff"/><rect x="1" y="1" width="14" height="2.500" fill="#2b2b2b"/><rect x="10" y="3" width="5" height="10" fill="#2b2b2b"/><rect x="11" y="4.500" width="3" height="1.800" fill="#fff"/><rect x="11" y="7.400" width="3" height="1.800" fill="#fff"/><rect x="11" y="10.300" width="3" height="1.800" fill="#fff"/><path d="M1 6.800c0-.9 1.900-1.600 4.300-1.600s4.300.7 4.300 1.600v7.500c0 .9-1.900 1.600-4.300 1.600S1 15.200 1 14.300z" fill="#2b2b2b"/><ellipse cx="5.300" cy="7.300" rx="3.200" ry="1.100" fill="#f4f4f4"/></svg><span class="t" style="left:29px;top:3.5px;line-height:16px;font-size:12px;color:#fff;letter-spacing:-0.418px;font-weight:700;">CustomerAccounts</span><div class="r" style="left:2px;top:26px;width:150px;height:2px;background:#e6e6e6;"></div><div class="r" style="left:2px;top:28px;width:150px;height:24px;background:#9b9b9b;"></div><svg class="i" style="left:6px;top:30px" width="17" height="17" viewBox="0 0 17 17"><path d="M0 1.500h4c2.500-1.500 5.500-1.500 8 0h4v5h-0v9.500H9c-.8.600-2.200 1-3.800 1C2.800 17 1 16.200 1 15V6.500H0z" fill="#fff"/><path d="M2.200 5c2.800-3.300 8.800-3.300 11.600 0" fill="none" stroke="#2b2b2b" stroke-width="1.400"/><polygon points="1,2.500 4.200,5.800 1,5.800" fill="#2b2b2b"/><polygon points="15,2.500 11.800,5.800 15,5.800" fill="#2b2b2b"/><rect x="9" y="7" width="6" height="8" fill="#2b2b2b"/><rect x="10" y="8.200" width="4" height="1.500" fill="#fff"/><rect x="10" y="10.500" width="4" height="1.500" fill="#fff"/><rect x="10" y="12.800" width="4" height="1.200" fill="#fff"/><path d="M2 8.200c0-.7 1.400-1.300 3.200-1.300s3.200.6 3.200 1.300v6c0 .7-1.400 1.300-3.200 1.300S2 14.900 2 14.200z" fill="#2b2b2b"/><ellipse cx="5.200" cy="8.500" rx="2.300" ry=".9" fill="#f4f4f4"/></svg><span class="t" style="left:29px;top:29.5px;line-height:16px;font-size:12px;color:#fff;letter-spacing:-0.303px;font-weight:700;">CustomerAccountsTableAdapter</span><div class="r" style="left:2px;top:52px;width:150px;height:20px;background:#fff;"></div><div class="r" style="left:2px;top:52px;width:19px;height:20px;background:#f2f2f2;"></div><svg class="i" style="left:2px;top:52px" width="18" height="18" viewBox="0 0 18 18"><path d="M3.400 4.200l1.700 1.900L8.500 2" stroke="#1e1e1e" stroke-width="1.700" fill="none"/><text x="1" y="14.400" font-family="Liberation Sans,sans-serif" font-size="9.800" fill="#1e1e1e" stroke="#1e1e1e" stroke-width=".3" textLength="14.300" lengthAdjust="spacingAndGlyphs">SQL</text></svg><span class="t" style="left:25px;top:55px;line-height:16px;font-size:12px;color:#1e1e1e;letter-spacing:-0.312px;">Fill,GetData ()</span></div><div class="bx" style="left:506px;top:548px;width:228px;height:74px;background:#4f8dcd"><div class="r" style="left:2px;top:2px;width:224px;height:24px;background:#9b9b9b;"></div><svg class="i" style="left:6px;top:4px" width="17" height="17" viewBox="0 0 17 17" shape-rendering="geometricPrecision"><path d="M0 1c0-.6.400-1 1-1h14c.6 0 1 .4 1 1v12c0 .6-.4 1-1 1h-4v1c0 1.100-2.400 2-5.500 2S0 16.100 0 15z" fill="#fff"/><rect x="1" y="1" width="14" height="2.500" fill="#2b2b2b"/><rect x="10" y="3" width="5" height="10" fill="#2b2b2b"/><rect x="11" y="4.500" width="3" height="1.800" fill="#fff"/><rect x="11" y="7.400" width="3" height="1.800" fill="#fff"/><rect x="11" y="10.300" width="3" height="1.800" fill="#fff"/><path d="M1 6.800c0-.9 1.900-1.600 4.300-1.600s4.300.7 4.300 1.600v7.500c0 .9-1.900 1.600-4.300 1.600S1 15.200 1 14.300z" fill="#2b2b2b"/><ellipse cx="5.300" cy="7.300" rx="3.200" ry="1.100" fill="#f4f4f4"/></svg><span class="t" style="left:29px;top:3.5px;line-height:16px;font-size:12px;color:#fff;letter-spacing:-0.363px;font-weight:700;">GbTradBranch</span><svg class="i" style="left:210px;top:5px" width="13" height="17" viewBox="0 0 13 17"><rect x=".5" y=".5" width="12" height="16" rx="1.500" fill="none" stroke="#e4e4e4" stroke-width="1"/><path d="M3.500 4.500l3 3 3-3M3.500 9l3 3 3-3" fill="none" stroke="#e4e4e4" stroke-width="1.400"/></svg><div class="r" style="left:2px;top:26px;width:224px;height:2px;background:#e6e6e6;"></div><div class="r" style="left:2px;top:28px;width:224px;height:24px;background:#9b9b9b;"></div><svg class="i" style="left:6px;top:30px" width="17" height="17" viewBox="0 0 17 17"><path d="M0 1.500h4c2.500-1.500 5.500-1.500 8 0h4v5h-0v9.500H9c-.8.600-2.200 1-3.800 1C2.800 17 1 16.200 1 15V6.500H0z" fill="#fff"/><path d="M2.200 5c2.800-3.300 8.800-3.300 11.600 0" fill="none" stroke="#2b2b2b" stroke-width="1.400"/><polygon points="1,2.500 4.200,5.800 1,5.800" fill="#2b2b2b"/><polygon points="15,2.500 11.800,5.800 15,5.800" fill="#2b2b2b"/><rect x="9" y="7" width="6" height="8" fill="#2b2b2b"/><rect x="10" y="8.200" width="4" height="1.500" fill="#fff"/><rect x="10" y="10.500" width="4" height="1.500" fill="#fff"/><rect x="10" y="12.800" width="4" height="1.200" fill="#fff"/><path d="M2 8.200c0-.7 1.400-1.300 3.200-1.300s3.200.6 3.200 1.300v6c0 .7-1.400 1.300-3.200 1.300S2 14.900 2 14.200z" fill="#2b2b2b"/><ellipse cx="5.200" cy="8.500" rx="2.300" ry=".9" fill="#f4f4f4"/></svg><span class="t" style="left:29px;top:29.5px;line-height:16px;font-size:12px;color:#fff;letter-spacing:-0.256px;font-weight:700;">GbTradBranchTableAdapter</span><svg class="i" style="left:210px;top:31px" width="13" height="17" viewBox="0 0 13 17"><rect x=".5" y=".5" width="12" height="16" rx="1.500" fill="none" stroke="#e4e4e4" stroke-width="1"/><path d="M3.500 7.500l3-3 3 3M3.500 12l3-3 3 3" fill="none" stroke="#e4e4e4" stroke-width="1.400"/></svg><div class="r" style="left:2px;top:52px;width:224px;height:20px;background:#fff;"></div><div class="r" style="left:2px;top:52px;width:19px;height:20px;background:#f2f2f2;"></div><svg class="i" style="left:2px;top:52px" width="18" height="18" viewBox="0 0 18 18"><path d="M3.400 4.200l1.700 1.900L8.500 2" stroke="#1e1e1e" stroke-width="1.700" fill="none"/><text x="1" y="14.400" font-family="Liberation Sans,sans-serif" font-size="9.800" fill="#1e1e1e" stroke="#1e1e1e" stroke-width=".3" textLength="14.300" lengthAdjust="spacingAndGlyphs">SQL</text></svg><span class="t" style="left:25px;top:55px;line-height:16px;font-size:12px;color:#1e1e1e;letter-spacing:-0.312px;">Fill,GetData ()</span></div><div class="bx" style="left:19px;top:567px;width:203px;height:28px;background:#4f8dcd"><div class="r" style="left:2px;top:2px;width:199px;height:24px;background:#9b9b9b;"></div><svg class="i" style="left:6px;top:4px" width="17" height="17" viewBox="0 0 17 17" shape-rendering="geometricPrecision"><path d="M0 1c0-.6.400-1 1-1h14c.6 0 1 .4 1 1v12c0 .6-.4 1-1 1h-4v1c0 1.100-2.400 2-5.500 2S0 16.100 0 15z" fill="#fff"/><rect x="1" y="1" width="14" height="2.500" fill="#2b2b2b"/><rect x="10" y="3" width="5" height="10" fill="#2b2b2b"/><rect x="11" y="4.500" width="3" height="1.800" fill="#fff"/><rect x="11" y="7.400" width="3" height="1.800" fill="#fff"/><rect x="11" y="10.300" width="3" height="1.800" fill="#fff"/><path d="M1 6.800c0-.9 1.900-1.600 4.300-1.600s4.300.7 4.300 1.600v7.500c0 .9-1.900 1.600-4.300 1.600S1 15.200 1 14.300z" fill="#2b2b2b"/><ellipse cx="5.300" cy="7.300" rx="3.200" ry="1.100" fill="#f4f4f4"/></svg><span class="t" style="left:29px;top:3.5px;line-height:16px;font-size:12px;color:#fff;letter-spacing:-0.419px;font-weight:700;">CustDailyRoznamchaDS</span><svg class="i" style="left:185px;top:5px" width="13" height="17" viewBox="0 0 13 17"><rect x=".5" y=".5" width="12" height="16" rx="1.500" fill="none" stroke="#e4e4e4" stroke-width="1"/><path d="M3.500 4.500l3 3 3-3M3.500 9l3 3 3-3" fill="none" stroke="#e4e4e4" stroke-width="1.400"/></svg></div><div class="bx" style="left:248px;top:569px;width:213px;height:28px;background:#4f8dcd"><div class="r" style="left:2px;top:2px;width:209px;height:24px;background:#9b9b9b;"></div><svg class="i" style="left:6px;top:4px" width="17" height="17" viewBox="0 0 17 17" shape-rendering="geometricPrecision"><path d="M0 1c0-.6.400-1 1-1h14c.6 0 1 .4 1 1v12c0 .6-.4 1-1 1h-4v1c0 1.100-2.400 2-5.500 2S0 16.100 0 15z" fill="#fff"/><rect x="1" y="1" width="14" height="2.500" fill="#2b2b2b"/><rect x="10" y="3" width="5" height="10" fill="#2b2b2b"/><rect x="11" y="4.500" width="3" height="1.800" fill="#fff"/><rect x="11" y="7.400" width="3" height="1.800" fill="#fff"/><rect x="11" y="10.300" width="3" height="1.800" fill="#fff"/><path d="M1 6.800c0-.9 1.900-1.600 4.300-1.600s4.300.7 4.300 1.600v7.500c0 .9-1.900 1.600-4.300 1.600S1 15.200 1 14.300z" fill="#2b2b2b"/><ellipse cx="5.300" cy="7.300" rx="3.200" ry="1.100" fill="#f4f4f4"/></svg><span class="t" style="left:29px;top:3.5px;line-height:16px;font-size:12px;color:#fff;letter-spacing:-0.272px;font-weight:700;">AgetnDailyRoznamchaDS</span><svg class="i" style="left:195px;top:5px" width="13" height="17" viewBox="0 0 13 17"><rect x=".5" y=".5" width="12" height="16" rx="1.500" fill="none" stroke="#e4e4e4" stroke-width="1"/><path d="M3.500 4.500l3 3 3-3M3.500 9l3 3 3-3" fill="none" stroke="#e4e4e4" stroke-width="1.400"/></svg></div></div><span class="t v" style="left:-2.5px;top:4px;font-size:12px;color:#444;letter-spacing:-0.55px">Server Explorer</span><span class="t v" style="left:-2.5px;top:93px;font-size:12px;color:#444;letter-spacing:0.2px">Toolbox</span><div class="r" style="left:19px;top:22px;width:926px;height:2px;background:#d0d2de;"></div><div class="r" style="left:603px;top:3px;width:112px;height:20px;background:#d0d2de;"></div><span class="t" style="left:23px;top:6.5px;line-height:16px;font-size:12px;color:#1e1e1e;letter-spacing:-0.177px;">Source Control Explorer</span><span class="t" style="left:194px;top:6.5px;line-height:16px;font-size:12px;color:#1e1e1e;letter-spacing:-0.106px;">Agent.xaml.cs</span><span class="t" style="left:315px;top:6.5px;line-height:16px;font-size:12px;color:#1e1e1e;letter-spacing:-0.003px;">Agent.xaml</span><span class="t" style="left:422px;top:6.5px;line-height:16px;font-size:12px;color:#1e1e1e;letter-spacing:-0.526px;">RMSDatabase2DataSet.xsd</span><span class="t" style="left:607px;top:6.5px;line-height:16px;font-size:12px;color:#6d6d6d;letter-spacing:-0.504px;">DataSet1.xsd</span><span class="t" style="left:720px;top:6.5px;line-height:16px;font-size:12px;color:#1e1e1e;letter-spacing:-0.152px;">Remittenance.xaml.cs</span><svg class="i" style="left:0;top:0" width="1207" height="879" viewBox="0 0 1207 879"><path d="M684 14.500h3M687 11.500v6M687 12.500h5v4h-5M687 15.500h5" stroke="#6d6d6d" stroke-width="1" fill="none"/><path d="M702 10.8l8 7.4M710 10.8l-8 7.4" stroke="#6d6d6d" stroke-width="1.4" fill="none"/><path d="M921 10.500l-3.500 3.500 3.500 3.500M926 10.500l-3.500 3.500 3.500 3.500" stroke="#555" stroke-width="1.300" fill="none"/><path d="M933 10.500h9" stroke="#555" stroke-width="1.600"/><polygon points="933.500,13.500 941.500,13.500 937.500,18" fill="#555"/></svg><div class="r" style="left:928px;top:24px;width:17px;height:611px;background:#f0f0f0;"></div><div class="r" style="left:929px;top:62px;width:15px;height:263px;background:#cdcdcd;"></div><div class="r" style="left:19px;top:635px;width:926px;height:17px;background:#f0f0f0;"></div><div class="r" style="left:58px;top:636px;width:714px;height:15px;background:#cdcdcd;"></div><div class="r" style="left:19px;top:652px;width:926px;height:6px;background:#cfcfde;"></div><div class="r" style="left:946px;top:24px;width:2px;height:832px;background:#e2e2ea;"></div><svg class="i" style="left:0;top:0" width="1207" height="879" viewBox="0 0 1207 879"><path d="M933 36.500l3.500-3.500 3.500 3.500" stroke="#505050" stroke-width="2" fill="none"/><path d="M933 625l3.500 3.500 3.500-3.500" stroke="#505050" stroke-width="2" fill="none"/><path d="M30 640l-3.500 3.500 3.500 3.500" stroke="#505050" stroke-width="2" fill="none"/><path d="M918.500 640l3.500 3.500-3.500 3.500" stroke="#505050" stroke-width="2" fill="none"/></svg><span class="t" style="left:23px;top:660.5px;line-height:16px;font-size:12px;color:#444;letter-spacing:0.329px;">Output</span><div class="r" style="left:68px;top:666.0px;width:822px;height:5px;background-image:radial-gradient(circle at .5px .5px,#9a9ba6 .55px,transparent .8px),radial-gradient(circle at .5px .5px,#9a9ba6 .55px,transparent .8px);background-size:4px 4px,4px 4px;background-position:0 0,2px 2px;"></div><span class="t" style="left:26px;top:684.5px;line-height:16px;font-size:12px;color:#1e1e1e;letter-spacing:0.153px;">Show output from:</span><div class="r" style="left:132px;top:683px;width:300px;height:20px;background:#fff;box-shadow:inset 0 0 0 1px #e3e3e8;"></div><span class="t" style="left:136px;top:684.5px;line-height:16px;font-size:12px;color:#1e1e1e;letter-spacing:-0.075px;">Debug</span><div class="r" style="left:19px;top:816px;width:926px;height:14px;background:#e8e8ec;"></div><div class="r" style="left:19px;top:705px;width:926px;height:111px;background:#e6e7e8;overflow:hidden"><span class="t" style="left:12px;top:-12px;line-height:16px;font-size:11.65px;color:#1e1e1e;letter-spacing:0px;font-family:'Liberation Mono',monospace;">'RMS.vshost.exe' (Managed (v4.0.30319)): Loaded 'C:\Windows\Microsoft.Net\assembly\GAC_MSIL\System.Configuration\v4.0_4.0.0.0__b03f5f7f11d50a3a\System.Configuration.dll'</span><span class="t" style="left:12px;top:2px;line-height:16px;font-size:11.65px;color:#1e1e1e;letter-spacing:0px;font-family:'Liberation Mono',monospace;">'RMS.vshost.exe' (Managed (v4.0.30319)): Loaded 'Anonymously Hosted DynamicMethods Assembly'</span><span class="t" style="left:12px;top:17px;line-height:16px;font-size:11.65px;color:#1e1e1e;letter-spacing:0px;font-family:'Liberation Mono',monospace;">The thread '&lt;No Name&gt;' (0x78c) has exited with code 0 (0x0).</span><span class="t" style="left:12px;top:32px;line-height:16px;font-size:11.65px;color:#1e1e1e;letter-spacing:0px;font-family:'Liberation Mono',monospace;">A first chance exception of type 'System.InvalidCastException' occurred in System.Data.dll</span><span class="t" style="left:12px;top:47px;line-height:16px;font-size:11.65px;color:#1e1e1e;letter-spacing:0px;font-family:'Liberation Mono',monospace;">A first chance exception of type 'System.InvalidCastException' occurred in System.Data.dll</span><span class="t" style="left:12px;top:62px;line-height:16px;font-size:11.65px;color:#1e1e1e;letter-spacing:0px;font-family:'Liberation Mono',monospace;">The program '[1280] RMS.vshost.exe: Program Trace' has exited with code 0 (0x0).</span><span class="t" style="left:12px;top:77px;line-height:16px;font-size:11.65px;color:#1e1e1e;letter-spacing:0px;font-family:'Liberation Mono',monospace;">The program '[1280] RMS.vshost.exe: Managed (v4.0.30319)' has exited with code -1 (0xffffffff).</span></div><div class="r" style="left:36px;top:817px;width:329px;height:9px;background:#cbccd2;"></div><div class="r" style="left:928px;top:705px;width:17px;height:111px;background:#e8e8ec;"></div><div class="r" style="left:933px;top:779px;width:8px;height:7px;background:#cbccd2;"></div><div class="r" style="left:75px;top:829px;width:47px;height:22px;background:#f5f5f7;"></div><div class="r" style="left:74px;top:829px;width:1px;height:22px;background:#ccceda;"></div><div class="r" style="left:122px;top:829px;width:1px;height:22px;background:#ccceda;"></div><span class="t" style="left:24px;top:831.5px;line-height:16px;font-size:12px;color:#444;letter-spacing:-0.269px;">Error List</span><span class="t" style="left:80px;top:831.5px;line-height:16px;font-size:12px;color:#0e70c0;letter-spacing:0.329px;">Output</span><span class="t" style="left:128px;top:831.5px;line-height:16px;font-size:12px;color:#444;letter-spacing:-0.213px;">Find Symbol Results</span><svg class="i" style="left:0;top:0" width="1207" height="879" viewBox="0 0 1207 879"><polygon points="896.5,666 903.5,666 900,669.7" fill="#1e1e1e"/><path d="M915.5 663.5h4v6h-4z" fill="none" stroke="#1e1e1e" stroke-width="1"/><path d="M918.5 663.5v6M914.0 669.5h7M917.5 669.5v4.500" stroke="#1e1e1e" stroke-width="1" fill="none"/><path d="M930 664.3l8 7.4M938 664.3l-8 7.4" stroke="#1e1e1e" stroke-width="1.6" fill="none"/><polygon points="421.500,691.500 427.500,691.500 424.500,694.500" fill="#555"/><path d="M438.5 684v18" stroke="#d0d2dc" stroke-width="1"/><path d="M468.5 684v18" stroke="#d0d2dc" stroke-width="1"/><path d="M520.5 684v18" stroke="#d0d2dc" stroke-width="1"/><path d="M550.5 684v18" stroke="#d0d2dc" stroke-width="1"/><path d="M449 696h11M449 699h11M452 693h6" stroke="#c3c5cf" stroke-width="1.200"/><path d="M451 690c0-3 2-4 4-4l-1.500-1.500M455 686l-1.500 1.500" stroke="#c3c5cf" stroke-width="1.300" fill="none"/><path d="M479 692h9M479 695h11M479 698h11" stroke="#c3c5cf" stroke-width="1.200"/><path d="M480 689l3-3M480 689h5" stroke="#c3c5cf" stroke-width="1.300" fill="none"/><path d="M501 692h9M501 695h11M501 698h11" stroke="#c3c5cf" stroke-width="1.200"/><path d="M510 689l-3-3M510 689h-5" stroke="#c3c5cf" stroke-width="1.300" fill="none"/><path d="M530 685.500l6 6M536 685.500l-6 6" stroke="#c8252c" stroke-width="1.700"/><path d="M537 687.500h6M537 691h6M530 694.500h13M530 698h13" stroke="#1e1e1e" stroke-width="1.600"/><path d="M566.500 688.500h6v8h-5" stroke="#1e1e1e" stroke-width="1.700" fill="none"/><polygon points="568,692.500 568,700.500 563,696.500" fill="#1e1e1e"/><polygon points="29.0,817.5 29.0,825.5 25.0,821.5" fill="#868999"/><polygon points="917.5,817.5 917.5,825.5 921.5,821.5" fill="#868999"/><polygon points="932.5,716.0 940.5,716.0 936.5,712.0" fill="#868999"/><polygon points="932.5,802.0 940.5,802.0 936.5,806.0" fill="#868999"/></svg><span class="t" style="left:558.5px;top:685px;line-height:8px;font-size:7px;color:#1e1e1e;letter-spacing:0px;font-weight:700;">ab</span><span class="t" style="left:558.5px;top:692px;line-height:8px;font-size:7px;color:#1e1e1e;letter-spacing:0px;font-weight:700;">c</span><span class="t" style="left:955px;top:6.5px;line-height:16px;font-size:12px;color:#444;letter-spacing:-0.141px;">Solution Explorer</span><div class="r" style="left:1052px;top:12.0px;width:94px;height:5px;background-image:radial-gradient(circle at .5px .5px,#9a9ba6 .55px,transparent .8px),radial-gradient(circle at .5px .5px,#9a9ba6 .55px,transparent .8px);background-size:4px 4px,4px 4px;background-position:0 0,2px 2px;"></div><div class="r" style="left:951px;top:53px;width:249px;height:21px;background:#fff;"></div><span class="t" style="left:956px;top:55.5px;line-height:16px;font-size:12px;color:#6d6d6d;letter-spacing:-0.154px;">Search Solution Explorer (Ctrl+;)</span><div class="r" style="left:951px;top:76px;width:232px;height:379px;background:#f6f6f6;"></div><div class="r" style="left:1183px;top:76px;width:17px;height:379px;background:#e8e8ec;"></div><div class="r" style="left:1187px;top:230px;width:9px;height:56px;background:#cbccd2;"></div><div class="r" style="left:951px;top:455px;width:249px;height:17px;background:#e8e8ec;"></div><div class="r" style="left:968px;top:459px;width:171px;height:9px;background:#cbccd2;"></div><span class="t" style="left:1020px;top:80px;line-height:16px;font-size:12px;color:#1e1e1e;letter-spacing:-0.005px;">Login.xaml</span><span class="t" style="left:1020px;top:98px;line-height:16px;font-size:12px;color:#1e1e1e;letter-spacing:0.153px;">MainWindow.xaml</span><span class="t" style="left:1020px;top:116px;line-height:16px;font-size:12px;color:#1e1e1e;letter-spacing:0.113px;">MainWindowLogin.xaml</span><span class="t" style="left:1020px;top:134px;line-height:16px;font-size:12px;color:#1e1e1e;letter-spacing:-0.131px;">ManageAddedAsset.xaml</span><span class="t" style="left:1020px;top:152px;line-height:16px;font-size:12px;color:#1e1e1e;letter-spacing:0.01px;">ManageAgentAccounts.xaml</span><span class="t" style="left:1020px;top:170px;line-height:16px;font-size:12px;color:#1e1e1e;letter-spacing:-0.069px;">ManageBeneficiary.xaml</span><span class="t" style="left:1020px;top:188px;line-height:16px;font-size:12px;color:#1e1e1e;letter-spacing:-0.206px;">ManageCreatedAsset.xaml</span><span class="t" style="left:1020px;top:206px;line-height:16px;font-size:12px;color:#1e1e1e;letter-spacing:-0.021px;">ManageCustomer.xaml</span><span class="t" style="left:1020px;top:224px;line-height:16px;font-size:12px;color:#1e1e1e;letter-spacing:-0.319px;">ManageExpense.xaml</span><span class="t" style="left:1020px;top:242px;line-height:16px;font-size:12px;color:#1e1e1e;letter-spacing:-0.082px;">ManageRemittance.xaml</span><span class="t" style="left:1020px;top:260px;line-height:16px;font-size:12px;color:#1e1e1e;letter-spacing:-0.049px;">packages.config</span><span class="t" style="left:1020px;top:278px;line-height:16px;font-size:12px;color:#1e1e1e;letter-spacing:-0.134px;">PopulateCurrencies.xaml</span><span class="t" style="left:1020px;top:296px;line-height:16px;font-size:12px;color:#1e1e1e;letter-spacing:-0.064px;">PrintWinCustDrCr.xaml</span><span class="t" style="left:1020px;top:314px;line-height:16px;font-size:12px;color:#1e1e1e;letter-spacing:-0.016px;">PrintWinCustRemitt.xaml</span><span class="t" style="left:1020px;top:332px;line-height:16px;font-size:12px;color:#1e1e1e;letter-spacing:-0.091px;">PrintWinCustTransfer.xaml</span><span class="t" style="left:1020px;top:350px;line-height:16px;font-size:12px;color:#1e1e1e;letter-spacing:0.043px;">PrintWindNewAgent.xaml</span><span class="t" style="left:1020px;top:368px;line-height:16px;font-size:12px;color:#1e1e1e;letter-spacing:0.102px;">PrintWindow.xaml</span><span class="t" style="left:1020px;top:386px;line-height:16px;font-size:12px;color:#1e1e1e;letter-spacing:-0.016px;">PrintWinNewPtOrder.xaml</span><span class="t" style="left:1020px;top:404px;line-height:16px;font-size:12px;color:#1e1e1e;letter-spacing:-0.071px;">PrintWinPtOrderDrCr.xaml</span><span class="t" style="left:1020px;top:422px;line-height:16px;font-size:12px;color:#1e1e1e;letter-spacing:-0.234px;">PTOrder.xaml</span><span class="t" style="left:1020px;top:440px;line-height:16px;font-size:12px;color:#1e1e1e;letter-spacing:-0.286px;">PTOrderRepWin.xaml</span><svg class="i" style="left:0;top:0" width="1207" height="879" viewBox="0 0 1207 879"><path d="M980.500 83.2l4.200 4.500-4.200 4.500z" fill="none" stroke="#1e1e1e" stroke-width="1.300"/><path d="M1002.8 91.2V83.2H1008.5L1011.6 86.2V93.2" fill="none" stroke="#2b2b2b" stroke-width="1.900" stroke-linejoin="miter"/><rect x="999.5" y="90.6" width="11.500" height="4.800" rx="1.500" fill="#d9f1f5"/><rect x="1003.2" y="91.2" width="4.600" height="3.600" fill="#2a8a9a"/><path d="M1001.9 91.4l-1.500 1.600 1.500 1.600M1009.1 91.4l1.500 1.600-1.500 1.600" fill="none" stroke="#2a8a9a" stroke-width="1.100"/><path d="M980.500 101.2l4.200 4.500-4.200 4.500z" fill="none" stroke="#1e1e1e" stroke-width="1.300"/><path d="M1002.8 109.2V101.2H1008.5L1011.6 104.2V111.2" fill="none" stroke="#2b2b2b" stroke-width="1.900" stroke-linejoin="miter"/><rect x="999.5" y="108.6" width="11.500" height="4.800" rx="1.500" fill="#d9f1f5"/><rect x="1003.2" y="109.2" width="4.600" height="3.600" fill="#2a8a9a"/><path d="M1001.9 109.4l-1.500 1.600 1.500 1.600M1009.1 109.4l1.500 1.600-1.500 1.600" fill="none" stroke="#2a8a9a" stroke-width="1.100"/><path d="M980.500 119.2l4.200 4.500-4.200 4.500z" fill="none" stroke="#1e1e1e" stroke-width="1.300"/><path d="M1002.8 127.2V119.2H1008.5L1011.6 122.2V129.2" fill="none" stroke="#2b2b2b" stroke-width="1.900" stroke-linejoin="miter"/><rect x="999.5" y="126.6" width="11.500" height="4.800" rx="1.500" fill="#d9f1f5"/><rect x="1003.2" y="127.2" width="4.600" height="3.600" fill="#2a8a9a"/><path d="M1001.9 127.4l-1.500 1.600 1.500 1.600M1009.1 127.4l1.500 1.600-1.500 1.600" fill="none" stroke="#2a8a9a" stroke-width="1.100"/><path d="M980.500 137.2l4.200 4.500-4.200 4.500z" fill="none" stroke="#1e1e1e" stroke-width="1.300"/><path d="M1002.8 145.2V137.2H1008.5L1011.6 140.2V147.2" fill="none" stroke="#2b2b2b" stroke-width="1.900" stroke-linejoin="miter"/><rect x="999.5" y="144.6" width="11.500" height="4.800" rx="1.500" fill="#d9f1f5"/><rect x="1003.2" y="145.2" width="4.600" height="3.600" fill="#2a8a9a"/><path d="M1001.9 145.4l-1.500 1.600 1.500 1.600M1009.1 145.4l1.500 1.600-1.500 1.600" fill="none" stroke="#2a8a9a" stroke-width="1.100"/><path d="M980.500 155.2l4.200 4.500-4.200 4.500z" fill="none" stroke="#1e1e1e" stroke-width="1.300"/><path d="M1002.8 163.2V155.2H1008.5L1011.6 158.2V165.2" fill="none" stroke="#2b2b2b" stroke-width="1.900" stroke-linejoin="miter"/><rect x="999.5" y="162.6" width="11.500" height="4.800" rx="1.500" fill="#d9f1f5"/><rect x="1003.2" y="163.2" width="4.600" height="3.600" fill="#2a8a9a"/><path d="M1001.9 163.4l-1.500 1.600 1.500 1.600M1009.1 163.4l1.500 1.600-1.500 1.600" fill="none" stroke="#2a8a9a" stroke-width="1.100"/><path d="M980.500 173.2l4.200 4.500-4.200 4.500z" fill="none" stroke="#1e1e1e" stroke-width="1.300"/><path d="M1002.8 181.2V173.2H1008.5L1011.6 176.2V183.2" fill="none" stroke="#2b2b2b" stroke-width="1.900" stroke-linejoin="miter"/><rect x="999.5" y="180.6" width="11.500" height="4.800" rx="1.500" fill="#d9f1f5"/><rect x="1003.2" y="181.2" width="4.600" height="3.600" fill="#2a8a9a"/><path d="M1001.9 181.4l-1.500 1.600 1.500 1.600M1009.1 181.4l1.500 1.600-1.500 1.600" fill="none" stroke="#2a8a9a" stroke-width="1.100"/><path d="M980.500 191.2l4.200 4.500-4.200 4.500z" fill="none" stroke="#1e1e1e" stroke-width="1.300"/><path d="M1002.8 199.2V191.2H1008.5L1011.6 194.2V201.2" fill="none" stroke="#2b2b2b" stroke-width="1.900" stroke-linejoin="miter"/><rect x="999.5" y="198.6" width="11.500" height="4.800" rx="1.500" fill="#d9f1f5"/><rect x="1003.2" y="199.2" width="4.600" height="3.600" fill="#2a8a9a"/><path d="M1001.9 199.4l-1.500 1.600 1.500 1.600M1009.1 199.4l1.500 1.600-1.500 1.600" fill="none" stroke="#2a8a9a" stroke-width="1.100"/><path d="M980.500 209.2l4.200 4.500-4.200 4.500z" fill="none" stroke="#1e1e1e" stroke-width="1.300"/><path d="M1002.8 217.2V209.2H1008.5L1011.6 212.2V219.2" fill="none" stroke="#2b2b2b" stroke-width="1.900" stroke-linejoin="miter"/><rect x="999.5" y="216.6" width="11.500" height="4.800" rx="1.500" fill="#d9f1f5"/><rect x="1003.2" y="217.2" width="4.600" height="3.600" fill="#2a8a9a"/><path d="M1001.9 217.4l-1.500 1.600 1.500 1.600M1009.1 217.4l1.500 1.600-1.500 1.600" fill="none" stroke="#2a8a9a" stroke-width="1.100"/><path d="M980.500 227.2l4.200 4.500-4.200 4.500z" fill="none" stroke="#1e1e1e" stroke-width="1.300"/><path d="M1002.8 235.2V227.2H1008.5L1011.6 230.2V237.2" fill="none" stroke="#2b2b2b" stroke-width="1.900" stroke-linejoin="miter"/><rect x="999.5" y="234.6" width="11.500" height="4.800" rx="1.500" fill="#d9f1f5"/><rect x="1003.2" y="235.2" width="4.600" height="3.600" fill="#2a8a9a"/><path d="M1001.9 235.4l-1.500 1.600 1.500 1.600M1009.1 235.4l1.500 1.600-1.500 1.600" fill="none" stroke="#2a8a9a" stroke-width="1.100"/><path d="M980.500 245.2l4.200 4.500-4.200 4.500z" fill="none" stroke="#1e1e1e" stroke-width="1.300"/><path d="M1002.8 253.2V245.2H1008.5L1011.6 248.2V255.2" fill="none" stroke="#2b2b2b" stroke-width="1.900" stroke-linejoin="miter"/><rect x="999.5" y="252.6" width="11.500" height="4.800" rx="1.500" fill="#d9f1f5"/><rect x="1003.2" y="253.2" width="4.600" height="3.600" fill="#2a8a9a"/><path d="M1001.9 253.4l-1.500 1.600 1.500 1.600M1009.1 253.4l1.500 1.600-1.500 1.600" fill="none" stroke="#2a8a9a" stroke-width="1.100"/><path d="M1004.3 265V262.2H1009.5L1012.5 265.2V271.8H1006.5" fill="none" stroke="#2b2b2b" stroke-width="1.900" stroke-linejoin="miter"/><path d="M1001.6 266v2.500a2 2 0 0 0 4 0v-2.500M1003.6 270.5v3.500" fill="none" stroke="#2b2b2b" stroke-width="1.800"/><path d="M980.500 281.2l4.200 4.500-4.200 4.500z" fill="none" stroke="#1e1e1e" stroke-width="1.300"/><path d="M1002.8 289.2V281.2H1008.5L1011.6 284.2V291.2" fill="none" stroke="#2b2b2b" stroke-width="1.900" stroke-linejoin="miter"/><rect x="999.5" y="288.6" width="11.500" height="4.800" rx="1.500" fill="#d9f1f5"/><rect x="1003.2" y="289.2" width="4.600" height="3.600" fill="#2a8a9a"/><path d="M1001.9 289.4l-1.500 1.600 1.500 1.600M1009.1 289.4l1.500 1.600-1.500 1.600" fill="none" stroke="#2a8a9a" stroke-width="1.100"/><path d="M980.500 299.2l4.200 4.500-4.200 4.500z" fill="none" stroke="#1e1e1e" stroke-width="1.300"/><path d="M1002.8 307.2V299.2H1008.5L1011.6 302.2V309.2" fill="none" stroke="#2b2b2b" stroke-width="1.900" stroke-linejoin="miter"/><rect x="999.5" y="306.6" width="11.500" height="4.800" rx="1.500" fill="#d9f1f5"/><rect x="1003.2" y="307.2" width="4.600" height="3.600" fill="#2a8a9a"/><path d="M1001.9 307.4l-1.500 1.600 1.500 1.600M1009.1 307.4l1.500 1.600-1.500 1.600" fill="none" stroke="#2a8a9a" stroke-width="1.100"/><path d="M980.500 317.2l4.200 4.500-4.200 4.500z" fill="none" stroke="#1e1e1e" stroke-width="1.300"/><path d="M1002.8 325.2V317.2H1008.5L1011.6 320.2V327.2" fill="none" stroke="#2b2b2b" stroke-width="1.900" stroke-linejoin="miter"/><rect x="999.5" y="324.6" width="11.500" height="4.800" rx="1.500" fill="#d9f1f5"/><rect x="1003.2" y="325.2" width="4.600" height="3.600" fill="#2a8a9a"/><path d="M1001.9 325.4l-1.500 1.600 1.500 1.600M1009.1 325.4l1.500 1.600-1.500 1.600" fill="none" stroke="#2a8a9a" stroke-width="1.100"/><path d="M980.500 335.2l4.200 4.500-4.200 4.500z" fill="none" stroke="#1e1e1e" stroke-width="1.300"/><path d="M1002.8 343.2V335.2H1008.5L1011.6 338.2V345.2" fill="none" stroke="#2b2b2b" stroke-width="1.900" stroke-linejoin="miter"/><rect x="999.5" y="342.6" width="11.500" height="4.800" rx="1.500" fill="#d9f1f5"/><rect x="1003.2" y="343.2" width="4.600" height="3.600" fill="#2a8a9a"/><path d="M1001.9 343.4l-1.500 1.600 1.500 1.600M1009.1 343.4l1.500 1.600-1.500 1.600" fill="none" stroke="#2a8a9a" stroke-width="1.100"/><path d="M980.500 353.2l4.200 4.500-4.200 4.500z" fill="none" stroke="#1e1e1e" stroke-width="1.300"/><path d="M1002.8 361.2V353.2H1008.5L1011.6 356.2V363.2" fill="none" stroke="#2b2b2b" stroke-width="1.900" stroke-linejoin="miter"/><rect x="999.5" y="360.6" width="11.500" height="4.800" rx="1.500" fill="#d9f1f5"/><rect x="1003.2" y="361.2" width="4.600" height="3.600" fill="#2a8a9a"/><path d="M1001.9 361.4l-1.500 1.600 1.500 1.600M1009.1 361.4l1.500 1.600-1.500 1.600" fill="none" stroke="#2a8a9a" stroke-width="1.100"/><path d="M980.500 371.2l4.200 4.500-4.200 4.500z" fill="none" stroke="#1e1e1e" stroke-width="1.300"/><path d="M1002.8 379.2V371.2H1008.5L1011.6 374.2V381.2" fill="none" stroke="#2b2b2b" stroke-width="1.900" stroke-linejoin="miter"/><rect x="999.5" y="378.6" width="11.500" height="4.800" rx="1.500" fill="#d9f1f5"/><rect x="1003.2" y="379.2" width="4.600" height="3.600" fill="#2a8a9a"/><path d="M1001.9 379.4l-1.500 1.600 1.500 1.600M1009.1 379.4l1.500 1.600-1.500 1.600" fill="none" stroke="#2a8a9a" stroke-width="1.100"/><path d="M980.500 389.2l4.200 4.500-4.200 4.500z" fill="none" stroke="#1e1e1e" stroke-width="1.300"/><path d="M1002.8 397.2V389.2H1008.5L1011.6 392.2V399.2" fill="none" stroke="#2b2b2b" stroke-width="1.900" stroke-linejoin="miter"/><rect x="999.5" y="396.6" width="11.500" height="4.800" rx="1.500" fill="#d9f1f5"/><rect x="1003.2" y="397.2" width="4.600" height="3.600" fill="#2a8a9a"/><path d="M1001.9 397.4l-1.500 1.600 1.500 1.600M1009.1 397.4l1.500 1.600-1.500 1.600" fill="none" stroke="#2a8a9a" stroke-width="1.100"/><path d="M980.500 407.2l4.200 4.500-4.200 4.500z" fill="none" stroke="#1e1e1e" stroke-width="1.300"/><path d="M1002.8 415.2V407.2H1008.5L1011.6 410.2V417.2" fill="none" stroke="#2b2b2b" stroke-width="1.900" stroke-linejoin="miter"/><rect x="999.5" y="414.6" width="11.500" height="4.800" rx="1.500" fill="#d9f1f5"/><rect x="1003.2" y="415.2" width="4.600" height="3.600" fill="#2a8a9a"/><path d="M1001.9 415.4l-1.500 1.600 1.500 1.600M1009.1 415.4l1.500 1.600-1.500 1.600" fill="none" stroke="#2a8a9a" stroke-width="1.100"/><path d="M980.500 425.2l4.200 4.500-4.200 4.500z" fill="none" stroke="#1e1e1e" stroke-width="1.300"/><path d="M1002.8 433.2V425.2H1008.5L1011.6 428.2V435.2" fill="none" stroke="#2b2b2b" stroke-width="1.900" stroke-linejoin="miter"/><rect x="999.5" y="432.6" width="11.500" height="4.800" rx="1.500" fill="#d9f1f5"/><rect x="1003.2" y="433.2" width="4.600" height="3.600" fill="#2a8a9a"/><path d="M1001.9 433.4l-1.500 1.600 1.500 1.600M1009.1 433.4l1.500 1.600-1.500 1.600" fill="none" stroke="#2a8a9a" stroke-width="1.100"/><path d="M980.500 443.2l4.200 4.500-4.200 4.500z" fill="none" stroke="#1e1e1e" stroke-width="1.300"/><path d="M1002.8 451.2V443.2H1008.5L1011.6 446.2V453.2" fill="none" stroke="#2b2b2b" stroke-width="1.900" stroke-linejoin="miter"/><rect x="999.5" y="450.6" width="11.500" height="4.800" rx="1.500" fill="#d9f1f5"/><rect x="1003.2" y="451.2" width="4.600" height="3.600" fill="#2a8a9a"/><path d="M1001.9 451.4l-1.500 1.600 1.500 1.600M1009.1 451.4l1.500 1.600-1.500 1.600" fill="none" stroke="#2a8a9a" stroke-width="1.100"/><polygon points="1152.5,12 1159.5,12 1156,15.7" fill="#1e1e1e"/><path d="M1170.5 9.5h4v6h-4z" fill="none" stroke="#1e1e1e" stroke-width="1"/><path d="M1173.5 9.5v6M1169.0 15.5h7M1172.5 15.5v4.500" stroke="#1e1e1e" stroke-width="1" fill="none"/><path d="M1185 10.3l8 7.4M1193 10.3l-8 7.4" stroke="#1e1e1e" stroke-width="1.6" fill="none"/><circle cx="966" cy="39.500" r="5.500" fill="#c4c5cd"/><path d="M969 39.500h-5.500M965.500 37l-2.500 2.500 2.500 2.500" stroke="#f5f5f7" stroke-width="1.300" fill="none"/><circle cx="988" cy="39.500" r="5.500" fill="#c4c5cd"/><path d="M985 39.500h5.500M988.500 37l2.500 2.500-2.500 2.500" stroke="#f5f5f7" stroke-width="1.300" fill="none"/><path d="M1003.500 40l6.500-6.500 6.500 6.500M1005.500 39v6.500h3.500v-4h2v4h3.500v-6.500M1013.500 33.500v3" fill="none" stroke="#1e1e1e" stroke-width="1.500"/><path d="M1024.500 30v18M1155.500 30v18" stroke="#d0d2dc" stroke-width="1"/><circle cx="1043" cy="40.500" r="4.300" fill="none" stroke="#1e1e1e" stroke-width="2.100"/><path d="M1043 38v3h2.500" stroke="#1e1e1e" stroke-width="1.200" fill="none"/><polygon points="1035,34 1040,34 1037.500,37" fill="#1e1e1e"/><polygon points="1055,39 1061,39 1058,42" fill="#6d6d6d"/><path d="M1069 37.500h11M1077 34.500l3 3-3 3M1081 42.500h-11M1073 39.500l-3 3 3 3" fill="none" stroke="#1e1e1e" stroke-width="2"/><path d="M1093.200 42.500a4.600 4.600 0 0 1 2.300-7.300M1100.800 36.500a4.600 4.600 0 0 1-2.300 7.300" fill="none" stroke="#1e1e1e" stroke-width="2.700"/><polygon points="1094,32.500 1099.500,34.500 1095,38.500" fill="#1e1e1e"/><polygon points="1100,46.500 1094.500,44.500 1099,40.500" fill="#1e1e1e"/><rect x="1113.800" y="38.800" width="6.500" height="6" fill="none" stroke="#1e1e1e" stroke-width="2"/><path d="M1115.500 40.500h3M1116.500 35.500h7v6.500M1119.500 33h6.500v6.500" fill="none" stroke="#1e1e1e" stroke-width="1.300"/><path d="M1139.500 36.500h5l2.500 2.500v7h-7.500z" fill="none" stroke="#1e1e1e" stroke-width="1.200"/><path d="M1141 41h4M1141 43.500h4" stroke="#1e1e1e" stroke-width="1"/><path d="M1136.500 44v-11h8" fill="none" stroke="#1e1e1e" stroke-width="1" stroke-dasharray="1.500 1.500"/><path d="M1169 35l-3.300 3.500 3.300 3.500M1173.500 35l3.300 3.500-3.300 3.500" fill="none" stroke="#1e1e1e" stroke-width="1.500"/><path d="M1192.500 30.500v2M1195.500 30.500v2" stroke="#8a8c99" stroke-width="1.200"/><circle cx="1181" cy="61.500" r="3.200" fill="none" stroke="#6d6d6d" stroke-width="1.700"/><path d="M1178.500 64l-4 4" stroke="#6d6d6d" stroke-width="2"/><polygon points="1190,62.500 1196,62.500 1193,65.500" fill="#6d6d6d"/><polygon points="1187.5,88.0 1195.5,88.0 1191.5,84.0" fill="#868999"/><polygon points="1187.5,444.5 1195.5,444.5 1191.5,448.5" fill="#868999"/><polygon points="961.5,459.5 961.5,467.5 957.5,463.5" fill="#868999"/><polygon points="1172.5,459.5 1172.5,467.5 1176.5,463.5" fill="#868999"/></svg><div class="r" style="left:951px;top:455px;width:232px;height:1px;background:#e8e8ec;"></div><div class="r" style="left:951px;top:472px;width:98px;height:21px;background:#f5f5f7;"></div><div class="r" style="left:1049px;top:473px;width:1px;height:19px;background:#ccceda;"></div><div class="r" style="left:1133px;top:473px;width:1px;height:19px;background:#ccceda;"></div><span class="t" style="left:955px;top:474px;line-height:16px;font-size:12px;color:#0e70c0;letter-spacing:-0.141px;">Solution Explorer</span><span class="t" style="left:1056px;top:474px;line-height:16px;font-size:12px;color:#444;letter-spacing:-0.336px;">Team Explorer</span><span class="t" style="left:1139px;top:474px;line-height:16px;font-size:12px;color:#444;letter-spacing:-0.414px;">Class View</span><div class="r" style="left:951px;top:493px;width:249px;height:5px;background:#ccceda;"></div><div class="r" style="left:951px;top:498px;width:249px;height:21px;background:#007acc;"></div><span class="t" style="left:955px;top:500.5px;line-height:16px;font-size:12px;color:#fff;letter-spacing:-0.17px;">Properties</span><div class="r" style="left:1016px;top:506.0px;width:130px;height:5px;background-image:radial-gradient(circle at .5px .5px,#59a8de .55px,transparent .8px),radial-gradient(circle at .5px .5px,#59a8de .55px,transparent .8px);background-size:4px 4px,4px 4px;background-position:0 0,2px 2px;"></div><div class="r" style="left:951px;top:520px;width:249px;height:21px;background:#fff;"></div><span class="t" style="left:957px;top:522.5px;line-height:16px;font-size:12px;color:#1e1e1e;letter-spacing:-0.186px;font-weight:700;">ContactNo</span><span class="t" style="left:1022px;top:522.5px;line-height:16px;font-size:12px;color:#1e1e1e;letter-spacing:0.03px;">DataColumn</span><div class="r" style="left:954px;top:545px;width:23px;height:22px;background:#f3f6fa;box-shadow:inset 0 0 0 1px #4d8ac8;"></div><div class="r" style="left:951px;top:570px;width:232px;height:215px;background:#f0f0f4;"></div><div class="r" style="left:967px;top:570px;width:216px;height:215px;background:#f6f6f7;"></div><div class="r" style="left:1183px;top:570px;width:17px;height:215px;background:#e8e8ec;"></div><div class="r" style="left:1187px;top:652px;width:9px;height:118px;background:#cbccd2;"></div><div class="r" style="left:967px;top:588px;width:216px;height:1px;background:#fbfbfc;"></div><div class="r" style="left:967px;top:571px;width:102px;height:18px;background:#3399ff;"></div><span class="t" style="left:970px;top:571.5px;line-height:16px;font-size:12px;color:#fff;letter-spacing:-0.296px;">DataType</span><span class="t" style="left:1073px;top:571.5px;line-height:16px;font-size:12px;color:#1e1e1e;letter-spacing:-0.208px;">System.String</span><div class="r" style="left:967px;top:607px;width:216px;height:1px;background:#fbfbfc;"></div><span class="t" style="left:970px;top:590.5px;line-height:16px;font-size:12px;color:#333;letter-spacing:0.117px;">DateTimeMode</span><span class="t" style="left:1073px;top:590.5px;line-height:16px;font-size:12px;color:#1e1e1e;letter-spacing:-0.087px;">UnspecifiedLocal</span><div class="r" style="left:967px;top:626px;width:216px;height:1px;background:#fbfbfc;"></div><span class="t" style="left:970px;top:609.5px;line-height:16px;font-size:12px;color:#333;letter-spacing:-0.069px;">DefaultValue</span><span class="t" style="left:1073px;top:609.5px;line-height:16px;font-size:12px;color:#1e1e1e;letter-spacing:0.079px;">&lt;DBNull&gt;</span><div class="r" style="left:967px;top:645px;width:216px;height:1px;background:#fbfbfc;"></div><span class="t" style="left:970px;top:628.5px;line-height:16px;font-size:12px;color:#333;letter-spacing:-0.438px;">Expression</span><div class="r" style="left:967px;top:664px;width:216px;height:1px;background:#fbfbfc;"></div><span class="t" style="left:970px;top:647.5px;line-height:16px;font-size:12px;color:#333;letter-spacing:-0.042px;">MaxLength</span><span class="t" style="left:1073px;top:647.5px;line-height:16px;font-size:12px;color:#1e1e1e;letter-spacing:-0.338px;">-1</span><div class="r" style="left:967px;top:683px;width:216px;height:1px;background:#fbfbfc;"></div><span class="t" style="left:970px;top:666.5px;line-height:16px;font-size:12px;color:#333;letter-spacing:-0.053px;">NullValue</span><span class="t" style="left:1073px;top:666.5px;line-height:16px;font-size:12px;color:#1e1e1e;letter-spacing:-0.003px;">(Throw exception)</span><div class="r" style="left:967px;top:702px;width:216px;height:1px;background:#fbfbfc;"></div><span class="t" style="left:970px;top:685.5px;line-height:16px;font-size:12px;color:#333;letter-spacing:-0.296px;">ReadOnly</span><span class="t" style="left:1073px;top:685.5px;line-height:16px;font-size:12px;color:#1e1e1e;letter-spacing:-0.469px;">False</span><div class="r" style="left:967px;top:721px;width:216px;height:1px;background:#fbfbfc;"></div><span class="t" style="left:970px;top:704.5px;line-height:16px;font-size:12px;color:#333;letter-spacing:-0.337px;">Source</span><span class="t" style="left:1073px;top:704.5px;line-height:16px;font-size:12px;color:#1e1e1e;letter-spacing:-0.186px;font-weight:700;">ContactNo</span><div class="r" style="left:967px;top:740px;width:216px;height:1px;background:#fbfbfc;"></div><span class="t" style="left:970px;top:723.5px;line-height:16px;font-size:12px;color:#333;letter-spacing:-0.007px;">Unique</span><span class="t" style="left:1073px;top:723.5px;line-height:16px;font-size:12px;color:#1e1e1e;letter-spacing:-0.469px;">False</span><div class="r" style="left:951px;top:741px;width:232px;height:19px;background:#eeeef2;"></div><span class="t" style="left:970px;top:742.5px;line-height:16px;font-size:12px;color:#1e1e1e;letter-spacing:0.077px;font-weight:700;">Misc</span><div class="r" style="left:967px;top:778px;width:216px;height:1px;background:#fbfbfc;"></div><span class="t" style="left:970px;top:761.5px;line-height:16px;font-size:12px;color:#333;letter-spacing:-0.005px;">Name</span><span class="t" style="left:1073px;top:761.5px;line-height:16px;font-size:12px;color:#1e1e1e;letter-spacing:-0.186px;font-weight:700;">ContactNo</span><div class="r" style="left:1069px;top:570px;width:1px;height:171px;background:#fbfbfc;"></div><div class="r" style="left:1069px;top:760px;width:1px;height:19px;background:#fbfbfc;"></div><div class="r" style="left:1165px;top:571px;width:17px;height:18px;background:#f1f1f1;box-shadow:inset 0 0 0 1px #ababab;"></div><div class="r" style="left:951px;top:785px;width:249px;height:3px;background:#eeeef2;"></div><div class="r" style="left:951px;top:788px;width:249px;height:62px;background:#f6f6f7;"></div><span class="t" style="left:957px;top:794px;line-height:16px;font-size:12px;color:#1e1e1e;letter-spacing:-0.016px;font-weight:700;">DataType</span><span class="t" style="left:957px;top:812px;line-height:16px;font-size:12px;color:#1e1e1e;letter-spacing:-0.036px;">Indicates the type of data stored in this</span><span class="t" style="left:957px;top:827px;line-height:16px;font-size:12px;color:#1e1e1e;letter-spacing:-0.003px;">column.</span><svg class="i" style="left:0;top:0" width="1207" height="879" viewBox="0 0 1207 879"><polygon points="1152.5,506 1159.5,506 1156,509.7" fill="#fff"/><path d="M1170.5 503.5h4v6h-4z" fill="none" stroke="#fff" stroke-width="1"/><path d="M1173.5 503.5v6M1169.0 509.5h7M1172.5 509.5v4.500" stroke="#fff" stroke-width="1" fill="none"/><path d="M1185 504.3l8 7.4M1193 504.3l-8 7.4" stroke="#fff" stroke-width="1.6" fill="none"/><polygon points="1190,530 1196,530 1193,533" fill="#444"/><rect x="958" y="549" width="5" height="5" fill="#2b2b2b"/><rect x="958" y="558.500" width="5" height="5" fill="#2b2b2b"/><path d="M959 551.500h3M960.500 550v3M959 561h3M960.500 559.500v3" stroke="#fff" stroke-width="1"/><path d="M964.500 549.700h5.500M964.500 552.200h5.500M964.500 554.700h5.500M964.500 557.200h5.500M964.500 560h5.500M964.500 562.600h5.500M971 552.200h1.300M971 557.200h1.300M971 562.600h1.300" stroke="#2b2b2b" stroke-width="1.300"/><rect x="981" y="549" width="7" height="6.700" fill="#2b2b2b"/><path d="M993 551.500v9.500M989.800 557.500l3.200 3.600 3.200-3.600" fill="none" stroke="#2b2b2b" stroke-width="1.900"/><path d="M1003.500 546v21" stroke="#d0d2dc" stroke-width="1"/><path d="M1012.500 561l6-6.500" stroke="#adadb3" stroke-width="2.800" stroke-linecap="round"/><circle cx="1020" cy="553" r="3.400" fill="#adadb3"/><path d="M1020.500 552.500l3.500-3.500" stroke="#eeeef2" stroke-width="2.400"/><path d="M1170 578l3.500 3.500 3.500-3.500" fill="none" stroke="#1e1e1e" stroke-width="1.800"/><polygon points="1187.5,581.5 1195.5,581.5 1191.5,577.5" fill="#868999"/><polygon points="1187.5,775.0 1195.5,775.0 1191.5,779.0" fill="#868999"/><rect x="954.500" y="746.500" width="8" height="8" fill="#fff" stroke="#555" stroke-width="1"/><path d="M956.500 750.500h4" stroke="#1e1e1e" stroke-width="1"/></svg><span class="t" style="left:982px;top:548.5px;line-height:8px;font-size:7px;color:#fff;letter-spacing:0px;font-weight:700;">A</span><span class="t" style="left:981.5px;top:557px;line-height:8px;font-size:8.5px;color:#1e1e1e;letter-spacing:0px;font-weight:700;">Z</span><div class="r" style="left:0px;top:856px;width:1207px;height:23px;background:#007acc;"></div><div class="r" style="left:1206px;top:0px;width:1px;height:879px;background:#1f1f1f;"></div><span class="t" style="left:-1px;top:859.5px;line-height:16px;font-size:12px;color:#fff;letter-spacing:-0.366px;">em(s) Saved</span>

</body></html>
